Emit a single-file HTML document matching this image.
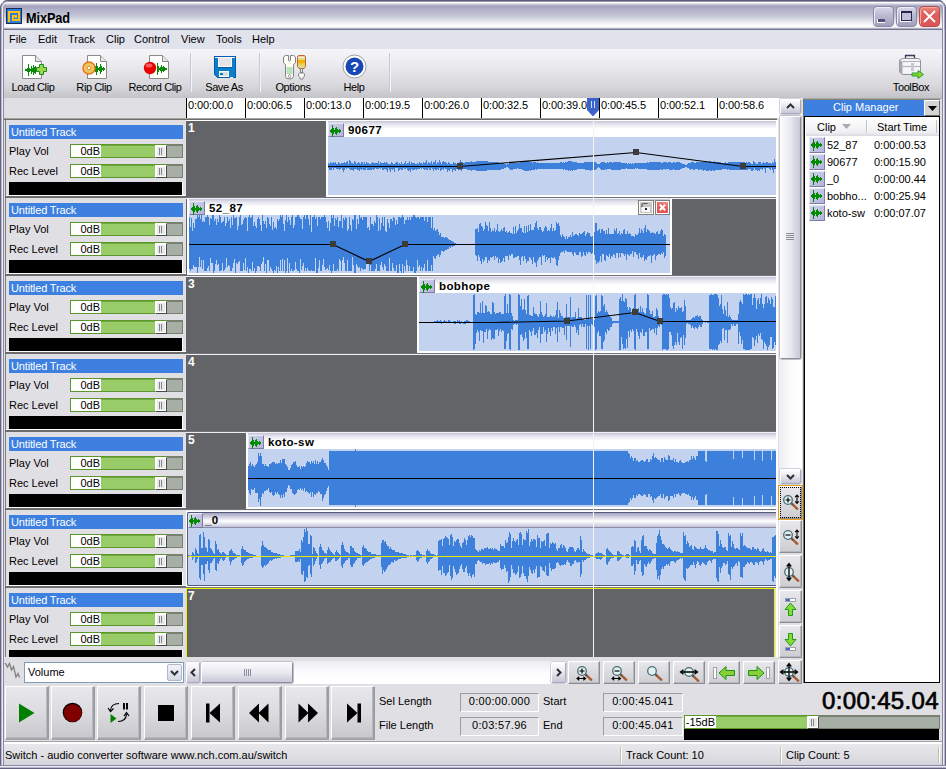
<!DOCTYPE html>
<html><head><meta charset="utf-8"><title>MixPad</title>
<style>
html,body{margin:0;padding:0;}
body{width:946px;height:769px;overflow:hidden;background:#fff;font-family:"Liberation Sans",sans-serif;font-size:11px;color:#000;position:relative;}
.a{position:absolute;}
.t{position:absolute;white-space:nowrap;line-height:13px;}
svg{position:absolute;overflow:visible;}
.btn{position:absolute;box-sizing:border-box;border:1px solid;border-color:#fff #8c8c94 #8c8c94 #fff;background:linear-gradient(#e8e8ec,#cecdd2);box-shadow:inset -1px -1px 0 #b8b8c0;}
.btn2{position:absolute;box-sizing:border-box;border:1px solid;border-color:#fff #a8a8bc #a8a8bc #fff;border-radius:2px;background:linear-gradient(#fefeff,#e6e6ee 50%,#c6c6d6);box-shadow:0 0 0 1px #d0d0dc;}
.fld{position:absolute;box-sizing:border-box;border:1px solid;border-color:#9c9ca4 #fff #fff #9c9ca4;text-align:center;line-height:15px;font-size:11px;letter-spacing:.3px;}
.lane{position:absolute;background:#636467;}
.num{position:absolute;color:#fff;font-weight:bold;font-size:12px;line-height:12px;}
.clip{position:absolute;background:#c3d3ef;overflow:hidden;}
.chead{position:absolute;left:0;top:0;right:0;height:16px;background:linear-gradient(#c4c4d8 0,#e4e4ee 3px,#fff 8px,#fff 100%);}
.chead.sel{height:17px;background:linear-gradient(#fff 0,#fff 1px,#585878 1px,#585878 2px,#a4a4c4 2px,#fff 10px,#c4c4d8 16px,#8c8ca8 16px,#8c8ca8 17px);}
.cname{position:absolute;left:20px;top:2px;font-weight:bold;font-size:11.5px;line-height:14px;letter-spacing:.4px;}
.ico{position:absolute;box-sizing:border-box;width:16px;height:14px;background:linear-gradient(135deg,#d0d0ec,#b4b4dc);border:1px solid;border-color:#e8e8f8 #7c7ca4 #7c7ca4 #e8e8f8;}
.tt{position:absolute;left:9px;width:174px;height:14px;background:#3d80df;color:#fff;line-height:14px;font-size:11px;text-indent:2px;letter-spacing:-.15px;}
.sl{position:absolute;box-sizing:border-box;height:14px;border:1px solid #5c962c;background:#98cc68;box-shadow:inset 0 1px 0 #70a83c;}
.sl .w{position:absolute;left:0;top:0;bottom:0;background:#fff;text-align:right;line-height:13px;font-size:11px;}
.sl .g{position:absolute;top:-1px;bottom:-1px;right:-1px;box-sizing:border-box;background:#a6aea6;border:1px solid #76826f;border-top-width:2px;}
.sl .th{position:absolute;top:0;bottom:-1px;width:12px;box-sizing:border-box;background:#e8e8e8;border:1px solid;border-color:#fff #484848 #484848 #fff;box-shadow:inset 1px 1px 0 #fff,inset -1px -1px 0 #fff;z-index:2;}
.sl .th:before{content:"";position:absolute;left:3px;top:2px;width:1px;height:7px;background:#7c8890;box-shadow:2px 0 0 #7c8890;}
.mi{position:absolute;top:33px;line-height:13px;font-size:11px;}
.tl{position:absolute;top:81px;line-height:13px;font-size:11px;text-align:center;letter-spacing:-.4px;}
.sep{position:absolute;top:53px;width:1px;height:39px;background:#c8c8d8;box-shadow:1px 0 0 #f4f4f8;}
.rt{position:absolute;top:99px;font-size:11px;line-height:13px;letter-spacing:-.1px;}
.tk{position:absolute;top:98px;width:1px;height:20px;background:#000;}
.row{position:absolute;left:827px;font-size:11px;line-height:13px;}
.rowt{position:absolute;left:874px;font-size:11px;line-height:13px;}
</style></head><body>

<div class="a" style="left:0;top:0;width:946px;height:769px;background:#e0dfe3;border-radius:8px 8px 0 0;"></div>
<div class="a" style="left:0;top:0;width:946px;height:30px;border-radius:8px 8px 0 0;background:linear-gradient(#5c5c78 0px,#5c5c78 1px,#9494ac 1px,#9494ac 2px,#ffffff 2px,#ffffff 3px,#e0e0e8 3.5px,#c8c8d8 4.5px,#b0b0c8 5.5px,#a4a4c0 6.5px,#acacc6 8.5px,#b4b4cc 10.5px,#b8bace 12.5px,#c0c2d2 14.5px,#c8cad8 16.5px,#d4d6e0 18.5px,#e0e2e8 20.5px,#ececf0 22.5px,#f8f8fa 24.5px,#ffffff 26.5px,#e8e8ec 27.5px,#b0b0c0 28.5px,#74748f 29px,#74748f 30px);"></div>

<div class="a" style="left:0;top:8px;width:4px;height:761px;background:linear-gradient(90deg,#62627e 0,#62627e 1px,#b8b8cc 1px,#b8b8cc 2px,#ececf4 2px,#ececf4 3px,#8888a0 3px,#8888a0 4px);"></div>
<div class="a" style="left:942px;top:8px;width:4px;height:761px;background:linear-gradient(90deg,#8888a0 0,#8888a0 1px,#ececf4 1px,#ececf4 2px,#b8b8cc 2px,#b8b8cc 3px,#62627e 3px,#62627e 4px);"></div>
<div class="a" style="left:0;top:765px;width:946px;height:4px;background:linear-gradient(#8888a0 0,#8888a0 1px,#ececf4 1px,#ececf4 2px,#b8b8cc 2px,#b8b8cc 3px,#62627e 3px,#62627e 4px);"></div>
<svg style="left:0;top:0" width="946" height="30" viewBox="0 0 946 30" fill="none"><path d="M.5 30V8A7.500 7.500 0 0 1 8 .5M945.500 30V8A7.500 7.500 0 0 0 938 .5" stroke="#62627e"/><path d="M1.500 30V8A6.500 6.500 0 0 1 8 1.500M944.500 30V8A6.500 6.500 0 0 0 938 1.500" stroke="#a4a4bc"/><path d="M2.500 30V8A5.500 5.500 0 0 1 8 2.500M943.500 30V8A5.500 5.500 0 0 0 938 2.500" stroke="#f4f4fa"/><path d="M3.500 30V9A4.500 4.500 0 0 1 6 4.500M942.500 30V9A4.500 4.500 0 0 0 940 4.500" stroke="#9c9cb4" stroke-opacity=".8"/></svg>

<svg style="left:6px;top:8px" width="16" height="16" viewBox="0 0 16 16" shape-rendering="crispEdges"><rect width="16" height="16" fill="#1c2c50"/><rect x="1" y="1" width="14" height="14" fill="#2f7be0"/><path d="M3 14V4H13V12H7V8H10V10" fill="none" stroke="#ffc20e" stroke-width="2"/></svg>
<div class="t" style="left:26px;top:9.6px;font-size:13px;font-weight:bold;line-height:15px;letter-spacing:-.1px;transform:scale(.98,1.1);transform-origin:0 3px;">MixPad</div>

<div class="a" style="left:873px;top:6px;width:21px;height:21px;box-sizing:border-box;border-radius:4px;border:1px solid #8888a8;background:linear-gradient(#d8d8e8 0,#bcbcd4 40%,#a0a0bc 100%);box-shadow:inset 1px 1px 0 #ececf6;"><div class="a" style="left:3px;top:12px;width:8px;height:4px;background:#fff;"></div><div class="a" style="left:4px;top:12px;width:7px;height:3px;background:#50507c;"></div></div>
<div class="a" style="left:896px;top:6px;width:21px;height:21px;box-sizing:border-box;border-radius:4px;border:1px solid #8888a8;background:linear-gradient(#d8d8e8 0,#bcbcd4 40%,#a0a0bc 100%);box-shadow:inset 1px 1px 0 #ececf6;"><div class="a" style="left:3px;top:4px;width:11px;height:11px;box-sizing:border-box;border:1px solid #fff;border-top-width:2px;"></div><div class="a" style="left:4px;top:4px;width:11px;height:10px;box-sizing:border-box;border:1px solid #28284c;border-top-width:2px;background:#c0c0d8;"></div></div>
<div class="a" style="left:919px;top:6px;width:21px;height:21px;box-sizing:border-box;border-radius:4px;border:1px solid #b84c4c;background:linear-gradient(#ec8878 0,#e06060 35%,#dc5456 100%);box-shadow:inset 1px 1px 0 #f4a898;"><svg style="left:3px;top:3px" width="13" height="13" viewBox="0 0 13 13"><path d="M1 1L12 12M12 1L1 12" stroke="#fff" stroke-width="1.900"/></svg></div>

<div class="a" style="left:4px;top:30px;width:938px;height:19px;background:#e0e2ec;"></div>
<div class="mi" style="left:9px">File</div>
<div class="mi" style="left:38px">Edit</div>
<div class="mi" style="left:68px">Track</div>
<div class="mi" style="left:106px">Clip</div>
<div class="mi" style="left:134px">Control</div>
<div class="mi" style="left:181px">View</div>
<div class="mi" style="left:216px">Tools</div>
<div class="mi" style="left:252px">Help</div>
<div class="a" style="left:4px;top:49px;width:938px;height:49px;background:linear-gradient(#f6f6fa 0,#ececf0 30%,#d8d8dc 75%,#c4c4c8 100%);"></div>
<div class="sep" style="left:190px"></div>
<div class="sep" style="left:259px"></div>
<div class="sep" style="left:389px"></div>
<svg style="left:22px;top:55px" width="20" height="24" viewBox="0 0 20 24"><path d="M.5 .5H13.500L19.500 6.500V23.500H.5Z" fill="#fff" stroke="#888" stroke-width="1"/><path d="M13.500 .5V6.500H19.500" fill="#e8e8e8" stroke="#888" stroke-width="1"/></svg>
<svg style="left:25px;top:62px" width="12" height="16" viewBox="0 0 12 16" shape-rendering="crispEdges"><path d="M0.5 7V9M1.5 7V9M2.5 6V10M3.5 2V14M4.5 6V10M5.5 7V9M6.5 4V12M7.5 6V10M8.5 3V13M9.5 5V11M10.5 4V12M11.5 6V10" stroke="#0a8a0a" stroke-width="1" fill="none"/></svg>
<svg style="left:36px;top:64px" width="11" height="11" viewBox="0 0 11 11"><path d="M3.500 .5H7.500V3.500H10.500V7.500H7.500V10.500H3.500V7.500H.5V3.500H3.500Z" fill="#9ad84a" stroke="#1c8c1c" stroke-width="1"/></svg>
<div class="tl" style="left:4px;width:58px;">Load Clip</div>
<svg style="left:87px;top:55px" width="20" height="24" viewBox="0 0 20 24"><path d="M.5 .5H13.500L19.500 6.500V23.500H.5Z" fill="#fff" stroke="#888" stroke-width="1"/><path d="M13.500 .5V6.500H19.500" fill="#e8e8e8" stroke="#888" stroke-width="1"/></svg>
<svg style="left:95px;top:61px" width="10" height="16" viewBox="0 0 10 16" shape-rendering="crispEdges"><path d="M0.5 5V11M1.5 2V14M2.5 5V11M3.5 7V9M4.5 6V10M5.5 3V13M6.5 5V11M7.5 7V9M8.5 6V10M9.5 7V9" stroke="#0a8a0a" stroke-width="1" fill="none"/></svg>
<svg style="left:82px;top:61px" width="14" height="14" viewBox="0 0 14 14"><circle cx="7" cy="7" r="6" fill="#e8c860" stroke="#f07010" stroke-width="1.4"/><circle cx="7" cy="7" r="1.800" fill="#fff" stroke="#f07010" stroke-width=".8"/></svg>
<div class="tl" style="left:65px;width:58px;">Rip Clip</div>
<svg style="left:149px;top:55px" width="20" height="24" viewBox="0 0 20 24"><path d="M.5 .5H13.500L19.500 6.500V23.500H.5Z" fill="#fff" stroke="#888" stroke-width="1"/><path d="M13.500 .5V6.500H19.500" fill="#e8e8e8" stroke="#888" stroke-width="1"/></svg>
<svg style="left:157px;top:61px" width="10" height="16" viewBox="0 0 10 16" shape-rendering="crispEdges"><path d="M0.5 2V14M1.5 5V11M2.5 7V9M3.5 6V10M4.5 4V12M5.5 6V10M6.5 5V11M7.5 6V10M8.5 7V9M9.5 7V9" stroke="#0a8a0a" stroke-width="1" fill="none"/></svg>
<svg style="left:143px;top:61px" width="14" height="14" viewBox="0 0 14 14"><circle cx="7" cy="7" r="6.200" fill="#e80000"/><ellipse cx="6" cy="4.500" rx="3.500" ry="2" fill="#ff8080" opacity=".7"/></svg>
<div class="tl" style="left:126px;width:58px;">Record Clip</div>
<svg style="left:214px;top:56px" width="22" height="22" viewBox="0 0 22 22" shape-rendering="crispEdges"><path d="M0 0H22V22H3L0 19Z" fill="#0858b8"/><path d="M1 1H21V21H3.500L1 18.500Z" fill="#0a80c8"/><rect x="1" y="1" width="20" height="1" fill="#f4f4f8"/><rect x="4" y="1" width="14" height="10" fill="#fffcf4"/><rect x="5" y="2" width="12" height="8" fill="#e4e4ea"/><rect x="4" y="11" width="14" height="1" fill="#0858b8"/><rect x="5" y="15" width="10" height="6" fill="#fffcf4"/><rect x="6" y="16" width="8" height="4" fill="#dcdce4"/><rect x="6" y="17" width="3" height="2" fill="#0a80c8"/><rect x="16" y="21" width="3" height="1" fill="#f0f0f4"/></svg>
<div class="tl" style="left:195px;width:58px;">Save As</div>
<svg style="left:282px;top:54px" width="26" height="27" viewBox="0 0 26 27"><path d="M3.500 1.500H6.500V6Q6.500 7 7.500 7Q8.500 7 8.500 6V1.500H11.500Q13.500 2 13.500 4V8.500L11.500 11V22.500Q11.500 25 7.500 25Q3.500 25 3.500 22.500V11L1.500 8.500V4Q1.500 2 3.500 1.500Z" fill="#fffcf2" stroke="#82828e" stroke-width="1"/><rect x="4.500" y="13" width="6" height="7" fill="#b8e2bc"/><path d="M7.500 20.300L8.800 22.300L7.500 24.300L6.200 22.300Z" fill="#fff" stroke="#82828e" stroke-width=".8"/><path d="M16.500 1.500H22.500L23.500 3V12.500L22 14.500H17L15.500 12.500V3Z" fill="#dcdc84"/><rect x="16" y="2" width="7" height="1" fill="#f4c8a8"/><rect x="16" y="3" width="7" height="1" fill="#f4f0d0"/><rect x="16" y="6" width="7" height="3.500" fill="#f4b400"/><rect x="16" y="9.500" width="7" height="1.500" fill="#e8cc50"/><path d="M16.500 1.500H22.500L23.500 3V12.500L22 14.500H17L15.500 12.500V3Z" fill="none" stroke="#c06434" stroke-width="1"/><rect x="18.500" y="14.500" width="2" height="4.500" fill="#d8f0d8" stroke="#82828e" stroke-width="1"/><path d="M17.500 19Q16.500 19.200 16.500 21V22L18 23.500V25H21V23.500L22.500 22V21Q22.500 19.200 21.500 19Z" fill="#fffcf2" stroke="#82828e" stroke-width="1"/></svg>
<div class="tl" style="left:264px;width:58px;">Options</div>
<svg style="left:342px;top:54px" width="25" height="25" viewBox="0 0 25 25"><circle cx="12.500" cy="12.500" r="11.500" fill="#fff" stroke="#9c9ca8" stroke-width="1"/><circle cx="12.500" cy="12.500" r="9" fill="#1848b8"/><text x="12.500" y="18" font-family="Liberation Sans,sans-serif" font-weight="bold" font-size="15" fill="#fff" text-anchor="middle">?</text></svg>
<div class="tl" style="left:325px;width:58px;">Help</div>
<svg style="left:899px;top:54px" width="25" height="26" viewBox="0 0 25 26"><path d="M6.500 5V1.500H15.500V5" fill="none" stroke="#383858" stroke-width="1.300"/><path d="M.5 6L3.500 4.500H19.500L21.500 6V20.500H3.500L.5 18Z" fill="#f4f4f8" stroke="#909098" stroke-width="1"/><path d="M.5 6L3.500 7.500V20.500L.5 18Z" fill="#a8a8b4"/><path d="M3.500 7.500H21.500M3.500 12.500H21.500" stroke="#b0b0b8" stroke-width="1"/><rect x="12" y="9" width="3" height="8" fill="#c8c8d0"/><path d="M13 19V22H19V24.500L24.500 20.500L19 16.500V19Z" fill="#88d038" stroke="#28a028" stroke-width="1"/></svg>
<div class="tl" style="left:881px;width:60px;">ToolBox</div>
<div class="a" style="left:186px;top:98px;width:593px;height:20px;background:#fff;"></div>
<div class="tk" style="left:186px"></div><div class="rt" style="left:188px">0:00:00.0</div>
<div class="tk" style="left:245px"></div><div class="rt" style="left:247px">0:00:06.5</div>
<div class="tk" style="left:304px"></div><div class="rt" style="left:306px">0:00:13.0</div>
<div class="tk" style="left:363px"></div><div class="rt" style="left:365px">0:00:19.5</div>
<div class="tk" style="left:422px"></div><div class="rt" style="left:424px">0:00:26.0</div>
<div class="tk" style="left:481px"></div><div class="rt" style="left:483px">0:00:32.5</div>
<div class="tk" style="left:540px"></div><div class="rt" style="left:542px">0:00:39.0</div>
<div class="tk" style="left:599px"></div><div class="rt" style="left:601px">0:00:45.5</div>
<div class="tk" style="left:658px"></div><div class="rt" style="left:660px">0:00:52.1</div>
<div class="tk" style="left:717px"></div><div class="rt" style="left:719px">0:00:58.6</div>
<div class="a" style="left:4px;top:118px;width:773px;height:1px;background:#a4a49c;"></div>
<div class="a" style="left:4px;top:119px;width:773px;height:1px;background:#6c6c6c;"></div>
<div class="a" style="left:186px;top:120px;width:591px;height:1px;background:#fff;"></div>
<div class="a" style="left:5px;top:118px;width:1px;height:539px;background:#7c7c7c;"></div>
<div class="a" style="left:776px;top:120px;width:2px;height:537px;background:#fff;"></div>
<div class="tt" style="top:125px">Untitled Track</div>
<div class="t" style="left:9px;top:145px">Play Vol</div>
<div class="t" style="left:9px;top:165px">Rec Level</div>
<div class="sl" style="left:70px;top:144px;width:113px;"><div class="w" style="width:30px">0dB&#8202;</div><div class="th" style="left:84px"></div><div class="g" style="width:17px"></div></div>
<div class="sl" style="left:70px;top:164px;width:113px;"><div class="w" style="width:30px">0dB&#8202;</div><div class="th" style="left:84px"></div><div class="g" style="width:17px"></div></div>
<div class="a" style="left:9px;top:182px;width:173px;height:13px;background:#000;"></div>
<div class="a" style="left:182px;top:182px;width:1px;height:13px;background:#fff;"></div>
<div class="lane" style="left:186px;top:121px;width:590px;height:76px;"></div>
<div class="num" style="left:188px;top:122px">1</div>
<div class="a" style="left:6px;top:195px;width:180px;height:1px;background:#fff;"></div>
<div class="a" style="left:5px;top:196px;width:181px;height:2px;background:#6c6c6c;"></div>
<div class="tt" style="top:203px">Untitled Track</div>
<div class="t" style="left:9px;top:223px">Play Vol</div>
<div class="t" style="left:9px;top:243px">Rec Level</div>
<div class="sl" style="left:70px;top:222px;width:113px;"><div class="w" style="width:30px">0dB&#8202;</div><div class="th" style="left:84px"></div><div class="g" style="width:17px"></div></div>
<div class="sl" style="left:70px;top:242px;width:113px;"><div class="w" style="width:30px">0dB&#8202;</div><div class="th" style="left:84px"></div><div class="g" style="width:17px"></div></div>
<div class="a" style="left:9px;top:260px;width:173px;height:13px;background:#000;"></div>
<div class="a" style="left:182px;top:260px;width:1px;height:13px;background:#fff;"></div>
<div class="lane" style="left:186px;top:199px;width:590px;height:76px;"></div>
<div class="a" style="left:186px;top:197px;width:590px;height:1px;background:#737478;"></div><div class="a" style="left:186px;top:198px;width:590px;height:1px;background:#f0f0f4;"></div>
<div class="num" style="left:188px;top:200px">2</div>
<div class="a" style="left:6px;top:273px;width:180px;height:1px;background:#fff;"></div>
<div class="a" style="left:5px;top:274px;width:181px;height:2px;background:#6c6c6c;"></div>
<div class="tt" style="top:281px">Untitled Track</div>
<div class="t" style="left:9px;top:301px">Play Vol</div>
<div class="t" style="left:9px;top:321px">Rec Level</div>
<div class="sl" style="left:70px;top:300px;width:113px;"><div class="w" style="width:30px">0dB&#8202;</div><div class="th" style="left:84px"></div><div class="g" style="width:17px"></div></div>
<div class="sl" style="left:70px;top:320px;width:113px;"><div class="w" style="width:30px">0dB&#8202;</div><div class="th" style="left:84px"></div><div class="g" style="width:17px"></div></div>
<div class="a" style="left:9px;top:338px;width:173px;height:13px;background:#000;"></div>
<div class="a" style="left:182px;top:338px;width:1px;height:13px;background:#fff;"></div>
<div class="lane" style="left:186px;top:277px;width:590px;height:76px;"></div>
<div class="a" style="left:186px;top:275px;width:590px;height:1px;background:#737478;"></div><div class="a" style="left:186px;top:276px;width:590px;height:1px;background:#f0f0f4;"></div>
<div class="num" style="left:188px;top:278px">3</div>
<div class="a" style="left:6px;top:351px;width:180px;height:1px;background:#fff;"></div>
<div class="a" style="left:5px;top:352px;width:181px;height:2px;background:#6c6c6c;"></div>
<div class="tt" style="top:359px">Untitled Track</div>
<div class="t" style="left:9px;top:379px">Play Vol</div>
<div class="t" style="left:9px;top:399px">Rec Level</div>
<div class="sl" style="left:70px;top:378px;width:113px;"><div class="w" style="width:30px">0dB&#8202;</div><div class="th" style="left:84px"></div><div class="g" style="width:17px"></div></div>
<div class="sl" style="left:70px;top:398px;width:113px;"><div class="w" style="width:30px">0dB&#8202;</div><div class="th" style="left:84px"></div><div class="g" style="width:17px"></div></div>
<div class="a" style="left:9px;top:416px;width:173px;height:13px;background:#000;"></div>
<div class="a" style="left:182px;top:416px;width:1px;height:13px;background:#fff;"></div>
<div class="lane" style="left:186px;top:355px;width:590px;height:76px;"></div>
<div class="a" style="left:186px;top:353px;width:590px;height:1px;background:#737478;"></div><div class="a" style="left:186px;top:354px;width:590px;height:1px;background:#f0f0f4;"></div>
<div class="num" style="left:188px;top:356px">4</div>
<div class="a" style="left:6px;top:429px;width:180px;height:1px;background:#fff;"></div>
<div class="a" style="left:5px;top:430px;width:181px;height:2px;background:#6c6c6c;"></div>
<div class="tt" style="top:437px">Untitled Track</div>
<div class="t" style="left:9px;top:457px">Play Vol</div>
<div class="t" style="left:9px;top:477px">Rec Level</div>
<div class="sl" style="left:70px;top:456px;width:113px;"><div class="w" style="width:30px">0dB&#8202;</div><div class="th" style="left:84px"></div><div class="g" style="width:17px"></div></div>
<div class="sl" style="left:70px;top:476px;width:113px;"><div class="w" style="width:30px">0dB&#8202;</div><div class="th" style="left:84px"></div><div class="g" style="width:17px"></div></div>
<div class="a" style="left:9px;top:494px;width:173px;height:13px;background:#000;"></div>
<div class="a" style="left:182px;top:494px;width:1px;height:13px;background:#fff;"></div>
<div class="lane" style="left:186px;top:433px;width:590px;height:76px;"></div>
<div class="a" style="left:186px;top:431px;width:590px;height:1px;background:#737478;"></div><div class="a" style="left:186px;top:432px;width:590px;height:1px;background:#f0f0f4;"></div>
<div class="num" style="left:188px;top:434px">5</div>
<div class="a" style="left:6px;top:507px;width:180px;height:1px;background:#fff;"></div>
<div class="a" style="left:5px;top:508px;width:181px;height:2px;background:#6c6c6c;"></div>
<div class="tt" style="top:515px">Untitled Track</div>
<div class="t" style="left:9px;top:535px">Play Vol</div>
<div class="t" style="left:9px;top:555px">Rec Level</div>
<div class="sl" style="left:70px;top:534px;width:113px;"><div class="w" style="width:30px">0dB&#8202;</div><div class="th" style="left:84px"></div><div class="g" style="width:17px"></div></div>
<div class="sl" style="left:70px;top:554px;width:113px;"><div class="w" style="width:30px">0dB&#8202;</div><div class="th" style="left:84px"></div><div class="g" style="width:17px"></div></div>
<div class="a" style="left:9px;top:572px;width:173px;height:13px;background:#000;"></div>
<div class="a" style="left:182px;top:572px;width:1px;height:13px;background:#fff;"></div>
<div class="lane" style="left:186px;top:511px;width:590px;height:76px;"></div>
<div class="a" style="left:186px;top:509px;width:590px;height:1px;background:#737478;"></div><div class="a" style="left:186px;top:510px;width:590px;height:1px;background:#f0f0f4;"></div>
<div class="num" style="left:188px;top:512px">6</div>
<div class="a" style="left:6px;top:585px;width:180px;height:1px;background:#fff;"></div>
<div class="a" style="left:5px;top:586px;width:181px;height:2px;background:#6c6c6c;"></div>
<div class="tt" style="top:593px">Untitled Track</div>
<div class="t" style="left:9px;top:613px">Play Vol</div>
<div class="t" style="left:9px;top:633px">Rec Level</div>
<div class="sl" style="left:70px;top:612px;width:113px;"><div class="w" style="width:30px">0dB&#8202;</div><div class="th" style="left:84px"></div><div class="g" style="width:17px"></div></div>
<div class="sl" style="left:70px;top:632px;width:113px;"><div class="w" style="width:30px">0dB&#8202;</div><div class="th" style="left:84px"></div><div class="g" style="width:17px"></div></div>
<div class="a" style="left:9px;top:650px;width:173px;height:7px;background:#000;"></div>
<div class="a" style="left:182px;top:650px;width:1px;height:7px;background:#fff;"></div>
<div class="lane" style="left:186px;top:589px;width:589px;height:68px;"></div>
<div class="a" style="left:186px;top:587px;width:590px;height:1px;background:#737478;"></div><div class="a" style="left:186px;top:588px;width:590px;height:1px;background:#f0f0f4;"></div>
<div class="num" style="left:188px;top:590px">7</div>
<div class="a" style="left:326px;top:121px;width:450px;height:76px;background:#fff;"></div><div class="clip" style="left:328px;top:121px;width:448px;height:74px;"><div class="chead"></div><div class="ico" style="left:0;top:2px;"></div><svg style="left:2px;top:2px" width="12" height="16" viewBox="0 0 12 16" shape-rendering="crispEdges"><path d="M0.5 7V9M1.5 6V10M2.5 2V14M3.5 5V11M4.5 7V9M5.5 5V11M6.5 4V12M7.5 6V10M8.5 7V9M9.5 6V10M10.5 7V9" stroke="#008a00" stroke-width="1" fill="none"/></svg><div class="cname">90677</div><svg style="left:0;top:0" width="448" height="74" viewBox="0 0 448 74" shape-rendering="crispEdges"><path d="M0.5 42V47M1.5 43V49M2.5 41V49M3.5 42V49M4.5 42V47M5.5 41V49M6.5 42V47M7.5 41V47M8.5 43V48M9.5 43V48M10.5 41V48M11.5 42V49M12.5 43V48M13.5 42V47M14.5 42V49M15.5 42V51M16.5 41V49M17.5 42V47M18.5 41V48M19.5 40V47M20.5 43V47M21.5 39V48M22.5 40V49M23.5 42V49M24.5 42V49M25.5 43V50M26.5 40V48M27.5 41V48M28.5 43V48M29.5 42V49M30.5 41V49M31.5 42V50M32.5 43V48M33.5 41V49M34.5 41V48M35.5 43V49M36.5 41V49M37.5 43V49M38.5 41V47M39.5 42V49M40.5 42V49M41.5 43V49M42.5 43V49M43.5 42V49M44.5 41V48M45.5 42V49M46.5 42V48M47.5 42V47M48.5 42V48M49.5 42V48M50.5 40V48M51.5 43V47M52.5 41V48M53.5 42V47M54.5 42V49M55.5 42V49M56.5 41V48M57.5 42V48M58.5 41V49M59.5 42V51M60.5 43V47M61.5 43V49M62.5 43V51M63.5 41V48M64.5 42V49M65.5 43V48M66.5 43V51M67.5 42V47M68.5 41V47M69.5 41V47M70.5 43V50M71.5 42V49M72.5 43V48M73.5 41V49M74.5 43V49M75.5 43V47M76.5 42V48M77.5 40V48M78.5 43V47M79.5 42V49M80.5 42V50M81.5 40V49M82.5 43V51M83.5 41V48M84.5 42V49M85.5 42V49M86.5 42V49M87.5 43V48M88.5 43V49M89.5 42V48M90.5 43V48M91.5 41V48M92.5 42V47M93.5 42V48M94.5 43V47M95.5 41V48M96.5 42V49M97.5 41V48M98.5 39V49M99.5 43V49M100.5 41V47M101.5 42V49M102.5 42V49M103.5 40V47M104.5 43V48M105.5 41V50M106.5 41V48M107.5 39V49M108.5 43V49M109.5 41V48M110.5 42V49M111.5 39V47M112.5 41V50M113.5 43V49M114.5 41V48M115.5 40V49M116.5 41V47M117.5 41V48M118.5 42V48M119.5 43V51M120.5 41V49M121.5 42V50M122.5 43V48M123.5 43V48M124.5 43V51M125.5 41V49M126.5 42V49M127.5 42V50M128.5 43V48M129.5 42V48M130.5 42V49M131.5 41V49M132.5 39V49M133.5 41V50M134.5 41V48M135.5 42V48M136.5 42V48M137.5 41V48M138.5 41V48M139.5 41V49M140.5 41V49M141.5 41V49M142.5 41V49M143.5 40V50M144.5 41V49M145.5 41V49M146.5 41V49M147.5 41V49M148.5 40V50M149.5 40V50M150.5 40V50M151.5 40V50M152.5 40V50M153.5 40V50M154.5 40V50M155.5 40V50M156.5 40V50M157.5 40V50M158.5 40V50M159.5 40V49M160.5 41V49M161.5 41V49M162.5 41V49M163.5 41V49M164.5 41V49M165.5 41V49M166.5 41V49M167.5 41V49M168.5 41V49M169.5 41V49M170.5 41V49M171.5 42V49M172.5 42V49M173.5 42V48M174.5 42V48M175.5 42V48M176.5 43V47M177.5 43V47M178.5 44V46M179.5 43V46M180.5 43V47M181.5 42V48M182.5 41V49M183.5 41V49M184.5 41V49M185.5 42V48M186.5 42V48M187.5 42V48M188.5 42V48M189.5 42V47M190.5 42V48M191.5 42V48M192.5 41V48M193.5 41V48M194.5 41V49M195.5 40V49M196.5 41V50M197.5 40V50M198.5 40V50M199.5 40V50M200.5 40V50M201.5 41V49M202.5 41V50M203.5 41V49M204.5 42V49M205.5 41V49M206.5 41V49M207.5 41V48M208.5 42V49M209.5 41V48M210.5 42V48M211.5 42V48M212.5 42V48M213.5 42V48M214.5 42V48M215.5 42V48M216.5 42V48M217.5 42V48M218.5 42V48M219.5 42V48M220.5 42V48M221.5 42V48M222.5 42V48M223.5 42V48M224.5 42V48M225.5 42V48M226.5 42V48M227.5 42V48M228.5 42V48M229.5 42V48M230.5 42V48M231.5 42V48M232.5 41V48M233.5 41V48M234.5 42V48M235.5 41V49M236.5 42V48M237.5 41V49M238.5 41V49M239.5 41V49M240.5 40V50M241.5 40V49M242.5 40V50M243.5 40V49M244.5 41V50M245.5 41V49M246.5 41V49M247.5 41V49M248.5 41V49M249.5 42V48M250.5 42V48M251.5 42V48M252.5 42V48M253.5 42V48M254.5 42V48M255.5 42V48M256.5 41V48M257.5 41V49M258.5 41V49M259.5 41V49M260.5 41V49M261.5 41V49M262.5 41V50M263.5 41V49M264.5 41V49M265.5 40V49M266.5 41V49M267.5 41V49M268.5 42V48M269.5 43V47M270.5 43V46M271.5 43V47M272.5 42V48M273.5 41V49M274.5 41V49M275.5 41V49M276.5 41V49M277.5 42V48M278.5 42V49M279.5 41V48M280.5 42V48M281.5 41V48M282.5 41V48M283.5 41V49M284.5 42V49M285.5 41V49M286.5 41V49M287.5 41V49M288.5 41V49M289.5 41V49M290.5 41V49M291.5 41V49M292.5 41V49M293.5 42V48M294.5 42V48M295.5 42V48M296.5 42V48M297.5 42V48M298.5 42V47M299.5 43V48M300.5 42V48M301.5 43V48M302.5 42V48M303.5 43V48M304.5 42V48M305.5 43V48M306.5 42V48M307.5 42V47M308.5 42V48M309.5 42V47M310.5 42V48M311.5 42V48M312.5 42V48M313.5 42V48M314.5 42V48M315.5 42V48M316.5 42V48M317.5 42V48M318.5 42V48M319.5 41V49M320.5 42V49M321.5 41V49M322.5 41V49M323.5 41V49M324.5 41V49M325.5 41V49M326.5 41V49M327.5 41V49M328.5 41V49M329.5 41V49M330.5 41V49M331.5 41V49M332.5 41V48M333.5 42V49M334.5 42V49M335.5 41V48M336.5 41V48M337.5 41V49M338.5 41V48M339.5 42V48M340.5 41V48M341.5 41V49M342.5 41V49M343.5 42V49M344.5 42V49M345.5 41V48M346.5 41V49M347.5 42V49M348.5 41V49M349.5 41V49M350.5 41V49M351.5 41V49M352.5 42V48M353.5 42V48M354.5 43V47M355.5 43V47M356.5 43V47M357.5 44V46M358.5 44V46M359.5 43V47M360.5 42V47M361.5 42V48M362.5 42V49M363.5 41V48M364.5 41V48M365.5 41V49M366.5 42V49M367.5 42V48M368.5 41V48M369.5 41V48M370.5 41V49M371.5 41V49M372.5 41V48M373.5 41V49M374.5 41V49M375.5 41V50M376.5 41V49M377.5 40V49M378.5 41V50M379.5 41V50M380.5 41V50M381.5 40V49M382.5 40V50M383.5 41V50M384.5 41V49M385.5 41V50M386.5 40V50M387.5 41V49M388.5 41V49M389.5 41V49M390.5 41V49M391.5 41V49M392.5 41V49M393.5 42V49M394.5 42V48M395.5 42V48M396.5 42V48M397.5 41V48M398.5 42V48M399.5 42V49M400.5 41V48M401.5 41V49M402.5 41V49M403.5 41V49M404.5 41V49M405.5 41V49M406.5 41V49M407.5 41V49M408.5 41V49M409.5 41V49M410.5 41V49M411.5 41V49M412.5 41V49M413.5 41V49M414.5 41V49M415.5 41V49M416.5 41V49M417.5 42V49M418.5 41V49M419.5 42V49M420.5 41V48M421.5 41V48M422.5 42V48M423.5 43V50M424.5 43V50M425.5 40V49M426.5 41V47M427.5 42V49M428.5 43V49M429.5 43V50M430.5 41V49M431.5 41V50M432.5 41V48M433.5 43V48M434.5 42V49M435.5 41V47M436.5 42V48M437.5 42V52M438.5 41V47M439.5 41V47M440.5 42V47M441.5 42V48M442.5 42V49M443.5 43V47M444.5 41V49M445.5 42V52M446.5 38V48M447.5 41V48" stroke="#3d80db" stroke-width="1" fill="none"/></svg><svg style="left:0;top:0" width="448" height="74" viewBox="0 0 448 74"><polyline points="0,45.5 132,45.5 308,31.5 415,45.5 448,45.5" fill="none" stroke="#000" stroke-width="1.15"/><rect x="129" y="42" width="6" height="6" fill="#3c3c3c" shape-rendering="crispEdges"/><rect x="305" y="28" width="6" height="6" fill="#3c3c3c" shape-rendering="crispEdges"/><rect x="412" y="42" width="6" height="6" fill="#3c3c3c" shape-rendering="crispEdges"/></svg></div>
<div class="a" style="left:187px;top:199px;width:485px;height:76px;background:#fff;"></div><div class="clip" style="left:189px;top:199px;width:481px;height:74px;"><div class="chead"></div><div class="ico" style="left:0;top:2px;"></div><svg style="left:2px;top:2px" width="12" height="16" viewBox="0 0 12 16" shape-rendering="crispEdges"><path d="M0.5 7V9M1.5 6V10M2.5 2V14M3.5 5V11M4.5 7V9M5.5 5V11M6.5 4V12M7.5 6V10M8.5 7V9M9.5 6V10M10.5 7V9" stroke="#008a00" stroke-width="1" fill="none"/></svg><div class="cname">52_87</div><svg style="left:0;top:0" width="481" height="74" viewBox="0 0 481 74" shape-rendering="crispEdges"><path d="M0.5 18V70M1.5 28V72M2.5 19V70M3.5 32V70M4.5 24V66M5.5 29V68M6.5 20V68M7.5 20V68M8.5 16V74M9.5 18V68M10.5 16V58M11.5 20V68M12.5 16V61M13.5 23V70M14.5 22V61M15.5 23V72M16.5 18V72M17.5 18V72M18.5 16V69M19.5 18V67M20.5 26V72M21.5 19V59M22.5 20V64M23.5 16V64M24.5 16V74M25.5 22V72M26.5 20V65M27.5 26V61M28.5 20V66M29.5 23V65M30.5 16V72M31.5 18V72M32.5 24V71M33.5 23V64M34.5 22V72M35.5 18V71M36.5 27V69M37.5 24V59M38.5 18V68M39.5 22V66M40.5 20V67M41.5 29V72M42.5 18V72M43.5 26V69M44.5 16V64M45.5 19V60M46.5 19V74M47.5 18V64M48.5 31V65M49.5 27V63M50.5 18V62M51.5 16V72M52.5 26V72M53.5 25V72M54.5 21V64M55.5 19V71M56.5 18V59M57.5 19V72M58.5 32V68M59.5 18V74M60.5 16V70M61.5 19V70M62.5 18V72M63.5 16V63M64.5 27V72M65.5 23V69M66.5 27V74M67.5 29V72M68.5 20V67M69.5 18V67M70.5 20V68M71.5 26V72M72.5 32V65M73.5 16V63M74.5 22V58M75.5 25V72M76.5 22V65M77.5 29V74M78.5 18V61M79.5 19V61M80.5 25V72M81.5 27V68M82.5 18V70M83.5 31V72M84.5 23V74M85.5 29V71M86.5 28V72M87.5 30V67M88.5 20V74M89.5 22V68M90.5 20V72M91.5 16V61M92.5 18V72M93.5 16V60M94.5 25V72M95.5 32V61M96.5 21V74M97.5 16V72M98.5 23V59M99.5 18V74M100.5 21V64M101.5 26V72M102.5 18V70M103.5 16V72M104.5 29V72M105.5 26V71M106.5 18V63M107.5 18V70M108.5 16V72M109.5 16V72M110.5 18V74M111.5 20V60M112.5 20V71M113.5 30V67M114.5 18V64M115.5 16V72M116.5 20V69M117.5 16V72M118.5 16V69M119.5 20V71M120.5 26V72M121.5 16V72M122.5 33V71M123.5 18V72M124.5 18V72M125.5 16V72M126.5 20V59M127.5 18V74M128.5 27V74M129.5 18V69M130.5 18V61M131.5 20V72M132.5 18V72M133.5 18V66M134.5 18V60M135.5 16V68M136.5 18V71M137.5 23V70M138.5 29V69M139.5 22V71M140.5 32V66M141.5 24V72M142.5 16V74M143.5 19V72M144.5 16V65M145.5 27V72M146.5 19V72M147.5 21V72M148.5 18V70M149.5 28V72M150.5 22V60M151.5 22V62M152.5 16V72M153.5 29V61M154.5 19V58M155.5 21V64M156.5 18V72M157.5 19V72M158.5 32V61M159.5 30V72M160.5 18V72M161.5 26V72M162.5 32V72M163.5 20V58M164.5 21V66M165.5 16V74M166.5 16V74M167.5 30V65M168.5 20V67M169.5 25V69M170.5 16V68M171.5 19V72M172.5 18V69M173.5 21V70M174.5 18V71M175.5 18V70M176.5 18V70M177.5 18V65M178.5 29V62M179.5 28V62M180.5 31V72M181.5 18V66M182.5 25V72M183.5 25V72M184.5 27V72M185.5 22V72M186.5 24V70M187.5 16V65M188.5 18V72M189.5 32V72M190.5 19V72M191.5 31V66M192.5 24V63M193.5 18V68M194.5 27V71M195.5 18V65M196.5 32V67M197.5 33V72M198.5 20V72M199.5 24V72M200.5 29V59M201.5 20V72M202.5 20V72M203.5 22V64M204.5 18V69M205.5 19V72M206.5 26V72M207.5 21V66M208.5 25V74M209.5 18V74M210.5 18V65M211.5 19V72M212.5 18V74M213.5 16V65M214.5 18V74M215.5 25V67M216.5 21V72M217.5 21V61M218.5 18V66M219.5 21V72M220.5 18V67M221.5 21V72M222.5 18V72M223.5 18V72M224.5 16V68M225.5 16V74M226.5 18V74M227.5 19V72M228.5 18V61M229.5 18V68M230.5 20V66M231.5 18V72M232.5 18V68M233.5 18V72M234.5 18V69M235.5 22V65M236.5 18V72M237.5 18V72M238.5 23V61M239.5 18V72M240.5 18V72M241.5 18V72M242.5 29V66M243.5 18V72M244.5 31V57M245.5 29V59M246.5 32V60M247.5 31V57M248.5 30V56M249.5 33V55M250.5 36V58M251.5 34V56M252.5 38V52M253.5 38V52M254.5 38V53M255.5 39V52M256.5 38V51M257.5 38V51M258.5 39V50M259.5 40V50M260.5 41V48M261.5 41V49M262.5 42V47M263.5 42V48M264.5 43V47M265.5 44V47M266.5 44V46M286.5 30V56M287.5 30V57M288.5 29V62M289.5 33V56M290.5 25V58M291.5 24V62M292.5 27V65M293.5 28V60M294.5 32V63M295.5 30V61M296.5 23V58M297.5 26V58M298.5 27V64M299.5 32V61M300.5 23V62M301.5 29V58M302.5 33V59M303.5 31V58M304.5 32V57M305.5 29V61M306.5 33V57M307.5 31V59M308.5 25V58M309.5 32V64M310.5 33V60M311.5 32V64M312.5 30V63M313.5 32V62M314.5 29V59M315.5 28V63M316.5 33V57M317.5 32V57M318.5 34V57M319.5 33V61M320.5 32V56M321.5 34V57M322.5 34V55M323.5 35V55M324.5 28V59M325.5 35V59M326.5 27V58M327.5 34V58M328.5 32V57M329.5 30V57M330.5 25V61M331.5 29V66M332.5 29V58M333.5 33V57M334.5 34V62M335.5 27V57M336.5 34V60M337.5 27V64M338.5 33V62M339.5 26V62M340.5 32V58M341.5 25V59M342.5 31V61M343.5 31V65M344.5 31V58M345.5 28V63M346.5 24V64M347.5 22V68M348.5 29V62M349.5 31V60M350.5 28V58M351.5 28V58M352.5 31V66M353.5 33V56M354.5 32V57M355.5 29V56M356.5 27V63M357.5 28V58M358.5 32V61M359.5 31V59M360.5 32V59M361.5 29V64M362.5 25V58M363.5 32V59M364.5 29V59M365.5 32V58M366.5 31V60M367.5 23V66M368.5 25V67M369.5 24V61M370.5 27V57M371.5 36V54M372.5 38V53M373.5 35V53M374.5 37V52M375.5 38V54M376.5 40V51M377.5 37V52M378.5 40V53M379.5 38V53M380.5 38V53M381.5 36V53M382.5 38V53M383.5 33V55M384.5 37V57M385.5 36V53M386.5 35V54M387.5 35V56M388.5 36V56M389.5 37V56M390.5 34V53M391.5 35V53M392.5 35V58M393.5 34V57M394.5 33V53M395.5 32V56M396.5 37V57M397.5 35V53M398.5 33V55M399.5 34V53M400.5 34V53M401.5 37V54M402.5 38V55M403.5 37V54M404.5 34V55M405.5 33V56M406.5 24V61M407.5 24V65M408.5 32V63M409.5 31V64M410.5 30V62M411.5 34V57M412.5 30V63M413.5 30V55M414.5 32V55M415.5 32V61M416.5 35V62M417.5 31V56M418.5 35V57M419.5 29V58M420.5 35V55M421.5 35V60M422.5 35V57M423.5 35V58M424.5 35V55M425.5 30V56M426.5 32V59M427.5 29V54M428.5 35V54M429.5 34V59M430.5 32V54M431.5 36V58M432.5 34V54M433.5 35V54M434.5 31V55M435.5 30V57M436.5 35V55M437.5 35V61M438.5 32V55M439.5 35V56M440.5 34V57M441.5 35V55M442.5 37V55M443.5 37V52M444.5 37V58M445.5 38V53M446.5 35V53M447.5 36V55M448.5 36V56M449.5 34V60M450.5 29V54M451.5 34V58M452.5 30V59M453.5 32V58M454.5 34V56M455.5 29V62M456.5 26V60M457.5 33V61M458.5 30V58M459.5 31V57M460.5 32V57M461.5 34V56M462.5 34V64M463.5 33V57M464.5 34V56M465.5 34V55M466.5 35V61M467.5 33V57M468.5 32V56M469.5 35V55M470.5 35V55M471.5 32V56M472.5 30V54M473.5 31V55M474.5 37V53M475.5 35V59M476.5 36V57" stroke="#3d80db" stroke-width="1" fill="none"/></svg><svg style="left:0;top:0" width="481" height="74" viewBox="0 0 481 74"><polyline points="0,45.5 144,45.5 180,62.5 216,45.5 481,45.5" fill="none" stroke="#000" stroke-width="1.15"/><rect x="141" y="42" width="6" height="6" fill="#3c3c3c" shape-rendering="crispEdges"/><rect x="177" y="59" width="6" height="6" fill="#3c3c3c" shape-rendering="crispEdges"/><rect x="213" y="42" width="6" height="6" fill="#3c3c3c" shape-rendering="crispEdges"/></svg><div class="a" style="left:449px;top:1px;width:16px;height:15px;box-sizing:border-box;border:1px solid #808080;background:#c6c6c6;box-shadow:inset 0 0 0 1px #fffcf0;"><svg style="left:1px;top:1px" width="11" height="11" viewBox="0 0 11 11"><path d="M2 5V3Q2 1.500 4 1.500H7.500" fill="none" stroke="#585858" stroke-width="1.200"/><rect x="2" y="5" width="8" height="5" fill="#f8f8f8" shape-rendering="crispEdges"/><rect x="1" y="6" width="1" height="1" fill="#f8f8f8"/><rect x="1" y="8" width="1" height="1" fill="#f8f8f8"/><rect x="5" y="6" width="2" height="2" fill="#202040" shape-rendering="crispEdges"/></svg></div><div class="a" style="left:466px;top:1px;width:15px;height:15px;box-sizing:border-box;border:1px solid #808080;background:linear-gradient(200deg,#f4a8a0,#e45c58 45%,#e05050);box-shadow:inset 0 0 0 1px #fff;"><svg style="left:3px;top:3px" width="7" height="7" viewBox="0 0 7 7"><path d="M.8 .8L6.200 6.200M6.200 .8L.8 6.200" stroke="#fff" stroke-width="2.100"/></svg></div></div>
<div class="a" style="left:417px;top:277px;width:359px;height:76px;background:#fff;"></div><div class="clip" style="left:419px;top:277px;width:357px;height:74px;"><div class="chead"></div><div class="ico" style="left:0;top:2px;"></div><svg style="left:2px;top:2px" width="12" height="16" viewBox="0 0 12 16" shape-rendering="crispEdges"><path d="M0.5 7V9M1.5 6V10M2.5 2V14M3.5 5V11M4.5 7V9M5.5 5V11M6.5 4V12M7.5 6V10M8.5 7V9M9.5 6V10M10.5 7V9" stroke="#008a00" stroke-width="1" fill="none"/></svg><div class="cname">bobhope</div><svg style="left:0;top:0" width="357" height="74" viewBox="0 0 357 74" shape-rendering="crispEdges"><path d="M15.5 44V46M16.5 44V46M17.5 44V46M18.5 43V46M19.5 44V45M20.5 44V45M21.5 43V46M22.5 44V47M23.5 45V46M24.5 44V46M25.5 43V45M26.5 44V45M27.5 44V46M28.5 45V45M29.5 43V46M30.5 43V45M31.5 44V46M32.5 45V46M33.5 45V46M34.5 44V45M35.5 44V47M36.5 44V47M37.5 45V45M38.5 43V45M39.5 44V46M40.5 43V47M41.5 45V47M42.5 44V45M43.5 45V45M44.5 45V47M45.5 44V47M46.5 44V47M47.5 43V46M48.5 43V46M49.5 44V46M50.5 44V46M54.5 18V73M55.5 17V72M56.5 37V67M57.5 38V56M58.5 35V53M59.5 35V55M60.5 36V64M61.5 26V53M62.5 36V54M63.5 24V54M64.5 36V66M65.5 36V55M66.5 28V55M67.5 29V52M68.5 35V62M69.5 34V54M70.5 35V52M71.5 37V53M72.5 37V63M73.5 25V61M74.5 26V62M75.5 35V62M76.5 37V53M77.5 36V53M78.5 36V52M79.5 36V59M80.5 35V54M81.5 35V52M82.5 37V55M83.5 37V53M84.5 37V54M85.5 19V72M86.5 17V72M87.5 36V64M88.5 27V57M89.5 36V56M90.5 17V72M91.5 18V73M92.5 36V52M93.5 39V53M94.5 43V48M95.5 44V47M96.5 43V47M97.5 43V48M98.5 43V47M99.5 17V73M100.5 18V73M101.5 29V58M102.5 22V57M103.5 33V60M104.5 32V64M105.5 22V62M106.5 33V55M107.5 37V61M108.5 19V72M109.5 18V72M110.5 38V53M111.5 38V55M112.5 39V59M113.5 39V54M114.5 30V51M115.5 36V58M116.5 37V58M117.5 37V56M118.5 39V61M119.5 40V53M120.5 37V50M121.5 24V66M122.5 35V57M123.5 38V57M124.5 40V50M125.5 39V55M126.5 37V53M127.5 26V65M128.5 40V57M129.5 40V51M130.5 40V55M131.5 38V59M132.5 39V51M133.5 40V54M134.5 39V50M135.5 40V50M136.5 38V57M137.5 33V51M138.5 25V65M139.5 41V50M140.5 33V55M141.5 36V50M142.5 39V50M143.5 39V51M144.5 41V51M145.5 41V58M146.5 40V49M147.5 27V63M148.5 40V49M149.5 40V49M150.5 40V49M151.5 20V70M152.5 41V49M153.5 40V50M154.5 40V50M155.5 40V48M156.5 35V50M157.5 42V56M158.5 41V53M159.5 31V58M160.5 40V48M161.5 40V47M162.5 40V50M163.5 42V47M164.5 42V50M165.5 43V50M166.5 43V47M167.5 18V72M168.5 42V49M169.5 18V73M170.5 42V49M171.5 18V72M172.5 42V47M173.5 42V48M174.5 42V50M175.5 43V50M176.5 19V73M177.5 18V72M178.5 36V56M179.5 34V54M180.5 35V59M181.5 34V59M182.5 18V72M183.5 19V72M184.5 29V65M185.5 27V63M186.5 35V55M187.5 33V57M188.5 35V52M189.5 37V54M190.5 39V53M191.5 40V50M192.5 41V50M193.5 44V47M194.5 44V46M195.5 44V46M196.5 44V46M197.5 44V46M198.5 44V46M199.5 44V46M200.5 22V73M201.5 20V73M202.5 24V60M203.5 17V67M204.5 24V72M205.5 25V71M206.5 21V72M207.5 22V62M208.5 30V71M209.5 33V54M210.5 30V60M211.5 31V53M212.5 37V55M213.5 38V52M214.5 31V54M215.5 18V72M216.5 17V73M217.5 37V52M218.5 37V55M219.5 31V59M220.5 35V62M221.5 29V55M222.5 35V56M223.5 31V52M224.5 35V59M225.5 36V59M226.5 37V55M227.5 31V55M228.5 17V72M229.5 18V72M230.5 33V51M231.5 37V54M232.5 37V53M233.5 34V52M234.5 40V52M235.5 40V56M236.5 39V51M237.5 31V58M238.5 33V51M239.5 39V49M240.5 41V50M241.5 43V47M242.5 42V48M243.5 18V73M244.5 17V72M245.5 17V72M246.5 18V72M247.5 17V73M248.5 18V73M249.5 17V72M250.5 21V55M251.5 30V55M252.5 32V58M253.5 31V69M254.5 26V72M255.5 25V68M256.5 35V65M257.5 31V68M258.5 33V56M259.5 29V65M260.5 31V68M261.5 31V61M262.5 30V60M263.5 35V72M264.5 34V58M265.5 23V68M266.5 29V61M267.5 43V47M268.5 43V46M269.5 43V47M270.5 43V47M271.5 43V48M272.5 42V51M273.5 41V49M274.5 40V51M275.5 41V52M276.5 39V50M277.5 39V51M278.5 38V52M279.5 40V50M280.5 39V48M281.5 39V50M282.5 42V50M283.5 43V47M284.5 45V45M285.5 45V45M286.5 44V46M287.5 44V45M288.5 44V46M289.5 45V46M290.5 18V72M291.5 18V72M292.5 17V72M293.5 18V73M294.5 18V72M295.5 17V73M296.5 17V72M297.5 17V73M298.5 18V73M299.5 21V68M300.5 29V67M301.5 27V64M302.5 18V66M303.5 32V52M304.5 37V51M305.5 29V63M306.5 33V53M307.5 39V53M308.5 25V66M309.5 40V53M310.5 38V53M311.5 40V52M312.5 42V47M313.5 43V49M314.5 43V47M315.5 43V49M316.5 43V49M317.5 43V47M318.5 43V47M319.5 37V67M320.5 25V55M321.5 23V59M322.5 25V67M323.5 27V63M324.5 17V72M325.5 18V72M326.5 17V73M327.5 17V73M328.5 18V73M329.5 17V73M330.5 18V73M331.5 17V72M332.5 17V72M333.5 28V60M334.5 21V61M335.5 17V69M336.5 21V63M337.5 32V59M338.5 23V66M339.5 21V57M340.5 27V59M341.5 21V56M342.5 17V62M343.5 27V63M344.5 31V72M345.5 27V65M346.5 20V67M347.5 19V69M348.5 26V73M349.5 21V70M350.5 23V68M351.5 27V60M352.5 20V60M353.5 22V72M354.5 30V71M355.5 30V65M356.5 19V68" stroke="#3d80db" stroke-width="1" fill="none"/></svg><svg style="left:0;top:0" width="357" height="74" viewBox="0 0 357 74"><polyline points="0,45.5 75,45.5 148,44 216,35.5 241,44.5 357,44.5" fill="none" stroke="#000" stroke-width="1.15"/><rect x="145" y="40.5" width="6" height="6" fill="#3c3c3c" shape-rendering="crispEdges"/><rect x="213" y="32" width="6" height="6" fill="#3c3c3c" shape-rendering="crispEdges"/><rect x="238" y="41" width="6" height="6" fill="#3c3c3c" shape-rendering="crispEdges"/></svg></div>
<div class="a" style="left:246px;top:433px;width:530px;height:76px;background:#fff;"></div><div class="clip" style="left:248px;top:433px;width:528px;height:74px;"><div class="chead"></div><div class="ico" style="left:0;top:2px;"></div><svg style="left:2px;top:2px" width="12" height="16" viewBox="0 0 12 16" shape-rendering="crispEdges"><path d="M0.5 7V9M1.5 6V10M2.5 2V14M3.5 5V11M4.5 7V9M5.5 5V11M6.5 4V12M7.5 6V10M8.5 7V9M9.5 6V10M10.5 7V9" stroke="#008a00" stroke-width="1" fill="none"/></svg><div class="cname">koto-sw</div><svg style="left:0;top:0" width="528" height="74" viewBox="0 0 528 74" shape-rendering="crispEdges"><path d="M0.5 33V57M1.5 31V60M2.5 29V62M3.5 33V56M4.5 31V57M5.5 33V57M6.5 34V55M7.5 32V60M8.5 31V60M9.5 29V60M10.5 20V69M11.5 23V66M12.5 20V73M13.5 23V64M14.5 31V60M15.5 31V61M16.5 33V58M17.5 31V58M18.5 33V57M19.5 33V57M20.5 34V55M21.5 31V59M22.5 31V60M23.5 30V59M24.5 29V62M25.5 29V63M26.5 29V62M27.5 31V59M28.5 30V61M29.5 31V59M30.5 30V61M31.5 30V62M32.5 27V65M33.5 30V62M34.5 26V65M35.5 26V61M36.5 26V64M37.5 31V59M38.5 32V59M39.5 34V55M40.5 37V52M41.5 37V53M42.5 35V56M43.5 32V56M44.5 31V60M45.5 29V61M46.5 29V62M47.5 28V61M48.5 32V60M49.5 34V57M50.5 34V56M51.5 33V57M52.5 36V55M53.5 33V57M54.5 34V56M55.5 33V58M56.5 34V55M57.5 33V59M58.5 30V58M59.5 28V59M60.5 29V60M61.5 29V61M62.5 31V59M63.5 28V64M64.5 30V59M65.5 28V64M66.5 31V61M67.5 27V62M68.5 31V60M69.5 28V60M70.5 31V58M71.5 29V59M72.5 29V61M73.5 27V61M74.5 25V68M75.5 27V65M76.5 30V62M77.5 30V61M78.5 32V58M79.5 34V55M80.5 37V53M81.5 18V72M82.5 18V72M83.5 18V72M84.5 18V72M85.5 18V72M86.5 18V72M87.5 18V72M88.5 18V72M89.5 18V72M90.5 18V72M91.5 18V72M92.5 18V72M93.5 18V72M94.5 18V72M95.5 18V72M96.5 18V72M97.5 18V72M98.5 18V72M99.5 18V72M100.5 18V72M101.5 18V72M102.5 18V72M103.5 18V72M104.5 18V72M105.5 18V72M106.5 18V72M107.5 16V74M108.5 18V72M109.5 18V72M110.5 18V72M111.5 18V72M112.5 18V72M113.5 18V72M114.5 18V72M115.5 18V72M116.5 18V72M117.5 18V72M118.5 18V72M119.5 18V72M120.5 18V72M121.5 18V72M122.5 18V72M123.5 18V72M124.5 18V72M125.5 18V72M126.5 18V72M127.5 18V72M128.5 18V72M129.5 18V72M130.5 18V72M131.5 18V72M132.5 18V72M133.5 18V72M134.5 18V72M135.5 18V72M136.5 18V72M137.5 18V72M138.5 18V72M139.5 18V72M140.5 18V72M141.5 18V72M142.5 18V72M143.5 18V72M144.5 18V72M145.5 18V72M146.5 18V72M147.5 18V72M148.5 18V72M149.5 18V72M150.5 18V72M151.5 18V72M152.5 18V72M153.5 18V72M154.5 18V72M155.5 18V72M156.5 18V72M157.5 18V72M158.5 18V72M159.5 18V72M160.5 18V72M161.5 18V72M162.5 18V72M163.5 18V72M164.5 18V72M165.5 18V72M166.5 18V72M167.5 18V72M168.5 18V72M169.5 18V72M170.5 18V72M171.5 18V72M172.5 18V72M173.5 18V72M174.5 18V72M175.5 18V72M176.5 18V72M177.5 18V72M178.5 18V72M179.5 18V72M180.5 18V72M181.5 18V72M182.5 18V72M183.5 18V72M184.5 18V72M185.5 18V72M186.5 18V72M187.5 18V72M188.5 18V72M189.5 18V72M190.5 18V72M191.5 18V72M192.5 18V72M193.5 18V72M194.5 18V72M195.5 18V72M196.5 18V72M197.5 18V72M198.5 18V72M199.5 18V72M200.5 18V72M201.5 18V72M202.5 18V72M203.5 18V72M204.5 18V72M205.5 18V72M206.5 18V72M207.5 18V72M208.5 18V72M209.5 18V72M210.5 18V72M211.5 18V72M212.5 18V72M213.5 18V72M214.5 18V72M215.5 18V72M216.5 18V72M217.5 18V72M218.5 18V72M219.5 18V72M220.5 18V72M221.5 18V72M222.5 18V72M223.5 18V72M224.5 18V72M225.5 18V72M226.5 18V72M227.5 18V72M228.5 18V72M229.5 18V72M230.5 18V72M231.5 18V72M232.5 18V72M233.5 18V72M234.5 18V72M235.5 18V72M236.5 18V72M237.5 18V72M238.5 18V72M239.5 18V72M240.5 18V72M241.5 18V72M242.5 18V72M243.5 18V72M244.5 18V72M245.5 18V72M246.5 18V72M247.5 18V72M248.5 18V72M249.5 18V72M250.5 18V72M251.5 18V72M252.5 18V72M253.5 18V72M254.5 18V72M255.5 18V72M256.5 18V72M257.5 18V72M258.5 18V72M259.5 18V72M260.5 18V72M261.5 18V72M262.5 18V72M263.5 18V72M264.5 18V72M265.5 18V72M266.5 18V72M267.5 18V72M268.5 18V72M269.5 18V72M270.5 18V72M271.5 18V72M272.5 18V72M273.5 18V72M274.5 18V72M275.5 18V72M276.5 18V72M277.5 18V72M278.5 18V72M279.5 18V72M280.5 18V72M281.5 18V72M282.5 18V72M283.5 18V72M284.5 18V72M285.5 18V72M286.5 18V72M287.5 18V72M288.5 18V72M289.5 18V72M290.5 18V72M291.5 18V72M292.5 18V72M293.5 18V72M294.5 18V72M295.5 18V72M296.5 18V72M297.5 18V72M298.5 18V72M299.5 18V72M300.5 18V72M301.5 18V72M302.5 18V72M303.5 18V72M304.5 18V72M305.5 18V72M306.5 18V72M307.5 18V72M308.5 18V72M309.5 18V72M310.5 18V72M311.5 18V72M312.5 18V72M313.5 18V72M314.5 18V72M315.5 18V72M316.5 18V72M317.5 18V72M318.5 18V72M319.5 18V72M320.5 18V72M321.5 18V72M322.5 18V72M323.5 18V72M324.5 18V72M325.5 18V72M326.5 18V72M327.5 18V72M328.5 18V72M329.5 18V72M330.5 18V72M331.5 18V72M332.5 18V72M333.5 18V72M334.5 18V72M335.5 18V72M336.5 18V72M337.5 18V72M338.5 18V72M339.5 18V72M340.5 18V72M341.5 18V72M342.5 18V72M343.5 18V72M344.5 18V72M345.5 18V72M346.5 18V72M347.5 18V72M348.5 18V72M349.5 18V72M350.5 18V72M351.5 18V72M352.5 18V72M353.5 18V72M354.5 18V72M355.5 18V72M356.5 18V72M357.5 18V72M358.5 18V72M359.5 18V72M360.5 18V72M361.5 18V72M362.5 18V72M363.5 18V72M364.5 18V72M365.5 18V72M366.5 18V72M367.5 18V72M368.5 18V72M369.5 18V72M370.5 18V72M371.5 18V72M372.5 18V72M373.5 18V72M374.5 18V72M375.5 18V72M376.5 18V72M377.5 18V72M378.5 18V72M379.5 18V72M380.5 20V70M381.5 21V69M382.5 25V65M383.5 23V67M384.5 25V65M385.5 28V62M386.5 25V65M387.5 25V65M388.5 28V62M389.5 27V63M390.5 29V61M391.5 29V61M392.5 28V62M393.5 27V63M394.5 27V63M395.5 28V62M396.5 29V61M397.5 28V62M398.5 26V64M399.5 26V64M400.5 29V61M401.5 29V61M402.5 26V64M403.5 27V63M404.5 23V67M405.5 20V70M406.5 25V65M407.5 24V66M408.5 25V65M409.5 26V64M410.5 27V63M411.5 27V63M412.5 29V61M413.5 25V65M414.5 25V65M415.5 29V61M416.5 24V66M417.5 26V64M418.5 27V63M419.5 27V63M420.5 22V68M421.5 23V67M422.5 27V63M423.5 27V63M424.5 27V63M425.5 25V65M426.5 29V61M427.5 26V64M428.5 29V61M429.5 29V61M430.5 30V60M431.5 28V62M432.5 27V63M433.5 29V61M434.5 30V60M435.5 30V60M436.5 30V60M437.5 29V61M438.5 29V61M439.5 28V62M440.5 29V61M441.5 27V63M442.5 27V63M443.5 23V67M444.5 26V64M445.5 23V67M446.5 25V65M447.5 27V63M448.5 23V67M449.5 23V67M450.5 18V72M451.5 18V72M452.5 18V72M453.5 18V72M454.5 18V72M455.5 18V72M456.5 18V72M457.5 28V62M458.5 29V61M459.5 18V72M460.5 18V72M461.5 18V72M462.5 18V72M463.5 18V72M464.5 18V72M465.5 18V72M466.5 18V72M467.5 18V72M468.5 18V72M469.5 18V72M470.5 18V72M471.5 18V72M472.5 18V72M473.5 18V72M474.5 18V72M475.5 18V72M476.5 18V72M477.5 18V72M478.5 18V72M479.5 18V72M480.5 18V72M481.5 18V72M482.5 18V72M483.5 18V72M484.5 18V72M485.5 26V64M486.5 18V72M487.5 18V72M488.5 18V72M489.5 18V72M490.5 18V72M491.5 18V72M492.5 18V72M493.5 18V72M494.5 25V65M495.5 18V72M496.5 18V72M497.5 18V72M498.5 18V72M499.5 18V72M500.5 18V72M501.5 18V72M502.5 18V72M503.5 18V72M504.5 18V72M505.5 18V72M506.5 27V63M507.5 18V72M508.5 18V72M509.5 18V72M510.5 18V72M511.5 18V72M512.5 18V72M513.5 18V72M514.5 28V62M515.5 18V72M516.5 18V72M517.5 18V72M518.5 18V72M519.5 18V72M520.5 18V72M521.5 18V72M522.5 18V72M523.5 27V63M524.5 18V72M525.5 18V72M526.5 18V72M527.5 18V72" stroke="#3d80db" stroke-width="1" fill="none"/></svg><svg style="left:0;top:0" width="528" height="74" viewBox="0 0 528 74"><polyline points="0,45.5 528,45.5" fill="none" stroke="#000" stroke-width="1.15"/></svg></div>
<div class="a" style="left:186px;top:511px;width:590px;height:76px;background:#fff;"></div><div class="clip" style="left:188px;top:511px;width:588px;height:74px;"><div class="chead sel"></div><div class="ico" style="left:0;top:2px;width:15px;height:15px;"></div><svg style="left:1px;top:2px" width="12" height="16" viewBox="0 0 12 16" shape-rendering="crispEdges"><path d="M0.5 7V9M1.5 6V10M2.5 2V14M3.5 5V11M4.5 7V9M5.5 5V11M6.5 4V12M7.5 6V10M8.5 7V9M9.5 6V10M10.5 7V9" stroke="#008a00" stroke-width="1" fill="none"/></svg><div class="cname" style="left:17px;">_0</div><svg style="left:0;top:0" width="588" height="74" viewBox="0 0 588 74" shape-rendering="crispEdges"><path d="M0.5 44V45M1.5 44V46M2.5 45V45M3.5 44V45M4.5 41V49M5.5 42V47M6.5 44V46M7.5 37V52M8.5 39V51M9.5 42V48M10.5 43V46M11.5 24V67M12.5 23V69M13.5 37V54M14.5 37V54M15.5 21V63M16.5 26V70M17.5 36V53M18.5 37V53M19.5 41V50M20.5 28V59M21.5 29V62M22.5 37V52M23.5 38V52M24.5 40V50M25.5 42V48M26.5 43V47M27.5 30V59M28.5 33V60M29.5 39V52M30.5 38V53M31.5 41V50M32.5 42V48M33.5 43V47M34.5 41V49M35.5 41V50M36.5 42V49M37.5 43V47M38.5 44V46M39.5 44V46M40.5 44V45M41.5 40V50M42.5 39V54M43.5 38V51M44.5 40V49M45.5 42V49M46.5 42V48M47.5 43V47M48.5 44V47M49.5 44V46M50.5 44V46M51.5 44V46M52.5 45V45M53.5 38V52M54.5 35V55M55.5 38V54M56.5 39V51M57.5 39V50M58.5 41V49M59.5 41V48M60.5 42V48M61.5 42V47M62.5 43V47M63.5 43V47M64.5 43V47M65.5 44V46M66.5 44V46M67.5 44V46M68.5 45V46M69.5 45V45M70.5 45V46M71.5 45V45M72.5 45V45M73.5 35V55M74.5 30V57M75.5 34V56M76.5 36V54M77.5 36V55M78.5 37V54M79.5 38V53M80.5 39V52M81.5 39V50M82.5 39V49M83.5 41V50M84.5 41V49M85.5 42V48M86.5 42V48M87.5 42V47M88.5 42V48M89.5 43V47M90.5 43V47M91.5 43V47M92.5 44V47M93.5 44V46M94.5 44V46M95.5 44V46M96.5 45V45M97.5 45V46M98.5 45V45M99.5 45V46M100.5 45V46M101.5 45V46M102.5 44V45M103.5 44V45M104.5 44V45M105.5 44V45M106.5 44V45M107.5 40V51M108.5 40V51M109.5 40V51M110.5 40V50M111.5 38V51M112.5 41V48M113.5 29V63M114.5 31V64M115.5 26V60M116.5 18V71M117.5 21V70M118.5 17V66M119.5 20V67M120.5 33V55M121.5 33V54M122.5 24V63M123.5 25V66M124.5 43V47M125.5 36V55M126.5 37V53M127.5 40V50M128.5 42V48M129.5 43V46M130.5 45V46M131.5 36V54M132.5 33V58M133.5 36V53M134.5 39V52M135.5 40V50M136.5 42V48M137.5 42V47M138.5 43V47M139.5 39V53M140.5 36V52M141.5 38V51M142.5 40V51M143.5 41V49M144.5 42V48M145.5 43V47M146.5 44V47M147.5 41V50M148.5 39V50M149.5 41V49M150.5 42V48M151.5 43V47M152.5 44V46M153.5 34V55M154.5 31V57M155.5 34V53M156.5 38V52M157.5 40V50M158.5 41V49M159.5 41V49M160.5 42V47M161.5 43V47M162.5 35V54M163.5 35V56M164.5 37V56M165.5 37V53M166.5 40V52M167.5 41V50M168.5 42V49M169.5 42V47M170.5 43V47M171.5 43V47M172.5 44V47M173.5 44V46M174.5 36V54M175.5 34V55M176.5 37V53M177.5 37V52M178.5 38V51M179.5 40V51M180.5 41V50M181.5 41V49M182.5 41V48M183.5 43V48M184.5 43V47M185.5 43V47M186.5 43V47M187.5 43V46M188.5 44V46M189.5 44V45M190.5 44V46M191.5 44V46M192.5 44V45M193.5 32V56M194.5 29V63M195.5 29V59M196.5 31V61M197.5 30V60M198.5 33V58M199.5 35V56M200.5 35V54M201.5 38V54M202.5 36V53M203.5 38V51M204.5 39V51M205.5 39V52M206.5 39V49M207.5 41V50M208.5 41V50M209.5 41V49M210.5 41V48M211.5 42V48M212.5 42V48M213.5 42V47M214.5 42V47M215.5 43V47M216.5 43V47M217.5 43V47M218.5 44V47M219.5 44V45M220.5 44V46M221.5 45V46M222.5 44V46M223.5 44V45M224.5 45V46M225.5 44V46M226.5 44V45M227.5 44V45M228.5 40V49M229.5 39V51M230.5 40V50M231.5 41V48M232.5 43V47M233.5 43V47M234.5 44V46M235.5 44V46M236.5 44V46M237.5 45V46M238.5 40V51M239.5 38V53M240.5 40V51M241.5 40V50M242.5 42V48M243.5 43V48M244.5 43V47M245.5 43V46M246.5 44V46M247.5 44V46M248.5 45V45M249.5 44V45M250.5 30V60M251.5 29V59M252.5 29V59M253.5 28V64M254.5 35V55M255.5 28V62M256.5 27V62M257.5 25V65M258.5 26V64M259.5 27V62M260.5 28V61M261.5 34V54M262.5 24V65M263.5 23V69M264.5 26V67M265.5 35V55M266.5 30V58M267.5 31V61M268.5 29V64M269.5 28V63M270.5 28V62M271.5 32V58M272.5 35V55M273.5 37V53M274.5 32V58M275.5 31V61M276.5 27V61M277.5 29V57M278.5 34V55M279.5 29V62M280.5 25V65M281.5 24V62M282.5 26V65M283.5 24V67M284.5 25V64M285.5 27V63M286.5 27V66M287.5 38V53M288.5 39V53M289.5 40V50M290.5 41V49M291.5 39V50M292.5 40V51M293.5 38V51M294.5 38V53M295.5 39V52M296.5 37V52M297.5 37V54M298.5 37V53M299.5 36V53M300.5 38V53M301.5 38V52M302.5 37V54M303.5 38V52M304.5 37V53M305.5 39V51M306.5 37V52M307.5 38V52M308.5 38V52M309.5 39V51M310.5 40V51M311.5 40V49M312.5 33V57M313.5 35V59M314.5 35V58M315.5 35V58M316.5 37V54M317.5 29V57M318.5 32V61M319.5 31V60M320.5 26V72M321.5 21V70M322.5 23V66M323.5 37V54M324.5 30V58M325.5 27V62M326.5 30V62M327.5 31V64M328.5 29V63M329.5 28V61M330.5 34V55M331.5 22V67M332.5 21V66M333.5 23V63M334.5 34V55M335.5 28V62M336.5 29V65M337.5 29V65M338.5 20V68M339.5 22V71M340.5 18V65M341.5 35V56M342.5 31V59M343.5 28V62M344.5 30V63M345.5 28V59M346.5 28V62M347.5 29V58M348.5 36V55M349.5 24V67M350.5 27V66M351.5 27V66M352.5 37V55M353.5 30V56M354.5 31V59M355.5 30V60M356.5 29V61M357.5 35V55M358.5 23V64M359.5 22V65M360.5 22V65M361.5 37V52M362.5 32V57M363.5 33V60M364.5 31V58M365.5 32V58M366.5 33V58M367.5 32V57M368.5 38V52M369.5 40V51M370.5 37V52M371.5 37V54M372.5 34V55M373.5 33V54M374.5 37V54M375.5 34V54M376.5 35V53M377.5 37V54M378.5 40V51M379.5 41V49M380.5 38V51M381.5 36V52M382.5 36V55M383.5 36V55M384.5 36V53M385.5 37V53M386.5 40V50M387.5 41V49M388.5 39V51M389.5 37V52M390.5 37V51M391.5 39V51M392.5 25V66M393.5 29V63M394.5 41V49M395.5 38V51M396.5 40V49M397.5 41V49M398.5 42V48M399.5 43V47M400.5 43V47M401.5 43V47M402.5 44V46M403.5 44V46M404.5 44V46M405.5 44V46M406.5 45V46M407.5 43V47M408.5 42V48M409.5 42V48M410.5 41V48M411.5 42V48M412.5 42V49M413.5 42V48M414.5 43V47M415.5 44V45M416.5 44V46M417.5 45V46M418.5 38V53M419.5 37V54M420.5 39V51M421.5 40V50M422.5 41V48M423.5 42V47M424.5 43V47M425.5 44V47M426.5 44V46M427.5 44V46M428.5 44V46M429.5 40V50M430.5 40V50M431.5 41V49M432.5 43V48M433.5 43V47M434.5 44V46M435.5 44V46M436.5 45V46M437.5 44V45M438.5 43V47M439.5 43V47M440.5 43V47M441.5 44V45M442.5 45V46M443.5 36V55M444.5 35V55M445.5 36V53M446.5 29V64M447.5 30V60M448.5 41V49M449.5 37V53M450.5 36V53M451.5 40V50M452.5 42V49M453.5 29V61M454.5 25V65M455.5 24V64M456.5 35V53M457.5 35V55M458.5 35V56M459.5 38V53M460.5 40V51M461.5 38V53M462.5 39V52M463.5 40V50M464.5 42V48M465.5 43V48M466.5 43V47M467.5 43V47M468.5 32V59M469.5 25V68M470.5 23V65M471.5 19V69M472.5 25V64M473.5 29V58M474.5 33V56M475.5 33V58M476.5 34V55M477.5 36V55M478.5 37V53M479.5 38V54M480.5 37V53M481.5 36V55M482.5 38V51M483.5 39V50M484.5 40V50M485.5 41V50M486.5 40V51M487.5 40V52M488.5 41V50M489.5 40V49M490.5 41V49M491.5 41V48M492.5 42V47M493.5 42V48M494.5 42V47M495.5 21V67M496.5 25V69M497.5 24V70M498.5 33V57M499.5 30V58M500.5 32V57M501.5 36V56M502.5 35V54M503.5 34V54M504.5 38V54M505.5 39V51M506.5 35V54M507.5 36V57M508.5 37V53M509.5 38V50M510.5 38V51M511.5 38V54M512.5 36V55M513.5 38V53M514.5 38V51M515.5 38V52M516.5 37V53M517.5 34V54M518.5 37V54M519.5 38V51M520.5 39V50M521.5 39V49M522.5 40V50M523.5 40V52M524.5 40V49M525.5 42V48M526.5 41V48M527.5 41V48M528.5 20V67M529.5 20V70M530.5 23V71M531.5 35V56M532.5 29V62M533.5 33V57M534.5 36V55M535.5 37V52M536.5 36V52M537.5 36V54M538.5 39V53M539.5 40V50M540.5 22V63M541.5 25V64M542.5 24V69M543.5 36V56M544.5 30V58M545.5 33V56M546.5 37V55M547.5 38V53M548.5 37V52M549.5 37V55M550.5 38V50M551.5 39V51M552.5 22V66M553.5 25V66M554.5 22V67M555.5 35V56M556.5 34V56M557.5 35V54M558.5 36V53M559.5 37V51M560.5 37V52M561.5 37V53M562.5 38V51M563.5 39V51M564.5 36V52M565.5 36V54M566.5 38V54M567.5 38V51M568.5 39V51M569.5 37V52M570.5 38V54M571.5 40V51M572.5 41V50M573.5 40V50M574.5 38V51M575.5 37V54M576.5 40V50M577.5 41V48M578.5 41V49M579.5 40V50M580.5 41V49M581.5 42V49M582.5 41V48M583.5 42V48M584.5 26V70M585.5 26V71M586.5 25V65M587.5 24V67" stroke="#3d80db" stroke-width="1" fill="none"/></svg><svg style="left:0;top:0" width="588" height="74" viewBox="0 0 588 74"><polyline points="0,45.5 588,45.5" fill="none" stroke="#e8e800" stroke-width="1.15"/></svg></div><div class="a" style="left:187px;top:512px;width:589px;height:74px;box-sizing:border-box;border:1px solid #585878;border-right:none;border-radius:2px 0 0 2px;"></div>
<div class="a" style="left:186px;top:588px;width:589px;height:69px;box-sizing:border-box;border:1px solid #f0f000;border-bottom:none;"></div>
<div class="a" style="left:593px;top:120px;width:1px;height:537px;background:#f4f4f4;"></div>
<svg style="left:587px;top:98px" width="12" height="19" viewBox="0 0 12 19"><path d="M0 0H12V12L6 18.500L0 12Z" fill="#3c62cc"/><path d="M4.500 3V10M7.500 3V10" stroke="#d0dcf8" stroke-width="1"/></svg>
<div class="a" style="left:779px;top:98px;width:23px;height:387px;background:linear-gradient(90deg,#ececf2,#fcfcfe 50%,#fff);"></div>
<div class="btn2" style="left:780px;top:99px;width:21px;height:15px;"></div>
<svg style="left:786px;top:103px" width="9" height="6" viewBox="0 0 9 6"><path d="M1 5L4.500 1.500L8 5" fill="none" stroke="#303038" stroke-width="2"/></svg>
<div class="a" style="left:780px;top:116px;width:21px;height:243px;box-sizing:border-box;border:1px solid;border-color:#fff #8c8c98 #8c8c98 #fff;border-radius:2px;background:linear-gradient(90deg,#fafafc,#e8e8f0 50%,#c8c8d8);box-shadow:0 0 0 1px #c0c0cc;"></div>
<div class="a" style="left:786px;top:233px;width:8px;height:1px;background:#8c8c98;box-shadow:0 2px 0 #8c8c98,0 4px 0 #8c8c98,0 6px 0 #8c8c98;"></div>
<div class="btn2" style="left:780px;top:469px;width:21px;height:15px;"></div>
<svg style="left:786px;top:474px" width="9" height="6" viewBox="0 0 9 6"><path d="M1 1L4.500 4.500L8 1" fill="none" stroke="#303038" stroke-width="2"/></svg>
<div class="btn" style="left:779px;top:486px;width:23px;height:33px;"></div>
<div class="btn" style="left:779px;top:520px;width:23px;height:33px;"></div>
<div class="btn" style="left:779px;top:555px;width:23px;height:33px;"></div>
<div class="btn" style="left:779px;top:590px;width:23px;height:33px;"></div>
<div class="btn" style="left:779px;top:625px;width:23px;height:33px;"></div>
<div class="a" style="left:778px;top:485px;width:25px;height:35px;box-sizing:border-box;border:1px solid #e8a020;"></div><div class="a" style="left:780px;top:487px;width:21px;height:31px;box-sizing:border-box;border:1px dotted #000;"></div>
<svg style="left:778px;top:490px" width="24" height="24" viewBox="-10 -10 24 24"><path d="M3.200 3.200L9.300 8.800" stroke="#a85a2c" stroke-width="2.400" stroke-linecap="round"/><path d="M3 3L5 4.800" stroke="#505860" stroke-width="1.800"/><circle cx="0" cy="0" r="4.300" fill="#e2f2ee" stroke="#4c6c7c" stroke-width="1.300"/><path d="M-2.500 0H2.500M0 -2.500V2.500" stroke="#000" stroke-width="1.200"/><path d="M9 -4.500V3M7.200 -2.800L9 -5L10.800 -2.800M7.200 1.300L9 3.500L10.800 1.300" stroke="#000" stroke-width="1.100" fill="none"/></svg>
<svg style="left:778px;top:525px" width="24" height="24" viewBox="-10 -10 24 24"><path d="M3.200 3.200L9.300 8.800" stroke="#a85a2c" stroke-width="2.400" stroke-linecap="round"/><path d="M3 3L5 4.800" stroke="#505860" stroke-width="1.800"/><circle cx="0" cy="0" r="4.300" fill="#e2f2ee" stroke="#4c6c7c" stroke-width="1.300"/><path d="M-2.500 0H2.500" stroke="#000" stroke-width="1.200"/><path d="M9 -4.500V3M7.200 -2.800L9 -5L10.800 -2.800M7.200 1.300L9 3.500L10.800 1.300" stroke="#000" stroke-width="1.100" fill="none"/></svg>
<svg style="left:779px;top:562px" width="24" height="24" viewBox="-10 -10 24 24"><path d="M3.200 3.200L9.300 8.800" stroke="#a85a2c" stroke-width="2.400" stroke-linecap="round"/><path d="M3 3L5 4.800" stroke="#505860" stroke-width="1.800"/><circle cx="0" cy="0" r="4.300" fill="#e2f2ee" stroke="#4c6c7c" stroke-width="1.300"/><path d="M0 -8V8M-2.200 -5.500L0 -8.500L2.200 -5.500M-2.200 5.500L0 8.500L2.200 5.500" stroke="#000" stroke-width="1.300" fill="none"/></svg>
<svg style="left:784px;top:597px" width="13" height="20" viewBox="0 0 13 20"><rect x="1.500" y="1.500" width="10" height="3" fill="#fff" stroke="#a0a0a8" stroke-width="1"/><rect x="2" y="2" width="4" height="2" fill="#4868d0"/><path d="M6.500 6L12 12.500H8.500V18.500H4.500V12.500H1Z" fill="#88d838" stroke="#1c9c1c" stroke-width="1"/></svg>
<svg style="left:784px;top:632px" width="13" height="20" viewBox="0 0 13 20"><rect x="1.500" y="15.500" width="10" height="3" fill="#fff" stroke="#a0a0a8" stroke-width="1"/><rect x="2" y="16" width="4" height="2" fill="#4868d0"/><path d="M6.500 14L12 7.500H8.500V1.500H4.500V7.500H1Z" fill="#88d838" stroke="#1c9c1c" stroke-width="1"/></svg>
<svg style="left:4px;top:662px" width="17" height="17" viewBox="0 0 17 17"><path d="M.5 1.500L2 2L3.500 5L5.500 1.500L7.500 8L9.500 4.500L12 15L14 11.500L15.500 15.500" fill="none" stroke="#808080" stroke-width="1.300"/></svg>
<div class="a" style="left:24px;top:662px;width:160px;height:21px;box-sizing:border-box;border:1px solid #7f9db9;background:#fff;"></div>
<div class="t" style="left:28px;top:666px;">Volume</div>
<div class="a" style="left:167px;top:664px;width:15px;height:17px;box-sizing:border-box;border:1px solid #b0b8d0;border-radius:2px;background:linear-gradient(#f4f4f8,#d4d8e4);"></div>
<svg style="left:170px;top:670px" width="9" height="6" viewBox="0 0 9 6"><path d="M1 1L4.500 4.500L8 1" fill="none" stroke="#303038" stroke-width="2"/></svg>
<div class="a" style="left:185px;top:661px;width:382px;height:23px;background:linear-gradient(#ececf2,#fcfcfe 50%,#fff);"></div>
<div class="btn2" style="left:186px;top:662px;width:14px;height:21px;"></div>
<svg style="left:190px;top:668px" width="6" height="9" viewBox="0 0 6 9"><path d="M5 1L1.500 4.500L5 8" fill="none" stroke="#303038" stroke-width="2"/></svg>
<div class="a" style="left:201px;top:662px;width:92px;height:21px;box-sizing:border-box;border:1px solid;border-color:#fff #8c8c98 #8c8c98 #fff;border-radius:2px;background:linear-gradient(#fafafc,#e8e8f0 50%,#c8c8d8);box-shadow:0 0 0 1px #c0c0cc;"></div>
<div class="a" style="left:244px;top:669px;width:1px;height:7px;background:#8c8c98;box-shadow:2px 0 0 #8c8c98,4px 0 0 #8c8c98,6px 0 0 #8c8c98;"></div>
<div class="btn2" style="left:551px;top:662px;width:15px;height:21px;"></div>
<svg style="left:556px;top:668px" width="6" height="9" viewBox="0 0 6 9"><path d="M1 1L4.500 4.500L1 8" fill="none" stroke="#303038" stroke-width="2"/></svg>
<div class="btn" style="left:568px;top:661px;width:32px;height:23px;"></div>
<div class="btn" style="left:603px;top:661px;width:32px;height:23px;"></div>
<div class="btn" style="left:638px;top:661px;width:32px;height:23px;"></div>
<div class="btn" style="left:673px;top:661px;width:32px;height:23px;"></div>
<div class="btn" style="left:708px;top:661px;width:32px;height:23px;"></div>
<div class="btn" style="left:743px;top:661px;width:32px;height:23px;"></div>
<div class="btn" style="left:778px;top:660px;width:24px;height:24px;"></div>
<svg style="left:571.5px;top:661px" width="24" height="24" viewBox="-10 -10 24 24"><path d="M3.200 3.200L9.300 8.800" stroke="#a85a2c" stroke-width="2.400" stroke-linecap="round"/><path d="M3 3L5 4.800" stroke="#505860" stroke-width="1.800"/><circle cx="0" cy="0" r="4.300" fill="#e2f2ee" stroke="#4c6c7c" stroke-width="1.300"/><path d="M-2.500 0H2.500M0 -2.500V2.500" stroke="#000" stroke-width="1.200"/><path d="M-4.500 7.500H3M-2.800 5.700L-5 7.500L-2.800 9.300M1.300 5.700L3.500 7.500L1.300 9.300" stroke="#000" stroke-width="1.100" fill="none"/></svg>
<svg style="left:606.5px;top:661px" width="24" height="24" viewBox="-10 -10 24 24"><path d="M3.200 3.200L9.300 8.800" stroke="#a85a2c" stroke-width="2.400" stroke-linecap="round"/><path d="M3 3L5 4.800" stroke="#505860" stroke-width="1.800"/><circle cx="0" cy="0" r="4.300" fill="#e2f2ee" stroke="#4c6c7c" stroke-width="1.300"/><path d="M-2.500 0H2.500" stroke="#000" stroke-width="1.200"/><path d="M-4.500 7.500H3M-2.800 5.700L-5 7.500L-2.800 9.300M1.300 5.700L3.500 7.500L1.300 9.300" stroke="#000" stroke-width="1.100" fill="none"/></svg>
<svg style="left:642px;top:660.5px" width="24" height="24" viewBox="-10 -10 24 24"><path d="M3.200 3.200L9.300 8.800" stroke="#a85a2c" stroke-width="2.400" stroke-linecap="round"/><path d="M3 3L5 4.800" stroke="#505860" stroke-width="1.800"/><circle cx="0" cy="0" r="4.300" fill="#e2f2ee" stroke="#4c6c7c" stroke-width="1.300"/></svg>
<svg style="left:679px;top:661.5px" width="24" height="24" viewBox="-10 -10 24 24"><path d="M3.200 3.200L9.300 8.800" stroke="#a85a2c" stroke-width="2.400" stroke-linecap="round"/><path d="M3 3L5 4.800" stroke="#505860" stroke-width="1.800"/><circle cx="0" cy="0" r="4.300" fill="#e2f2ee" stroke="#4c6c7c" stroke-width="1.300"/><path d="M-8 0H8M-5.500 -2.200L-8.500 0L-5.500 2.200M5.500 -2.200L8.500 0L5.500 2.200" stroke="#000" stroke-width="1.300" fill="none"/></svg>
<svg style="left:713px;top:665px" width="22" height="16" viewBox="0 0 22 16"><rect x=".5" y="2.500" width="3" height="11" fill="#fff" stroke="#a0a0a8" stroke-width="1"/><path d="M6 8L13 1.500V5.500H21.500V10.500H13V14.500Z" fill="#88d038" stroke="#1c901c" stroke-width="1"/></svg>
<svg style="left:748px;top:665px" width="22" height="16" viewBox="0 0 22 16"><rect x="18.500" y="2.500" width="3" height="11" fill="#fff" stroke="#a0a0a8" stroke-width="1"/><path d="M16 8L9 1.500V5.500H.5V10.500H9V14.500Z" fill="#88d038" stroke="#1c901c" stroke-width="1"/></svg>
<svg style="left:778.5px;top:661.5px" width="24" height="24" viewBox="-10 -10 24 24"><path d="M3.200 3.200L9.300 8.800" stroke="#a85a2c" stroke-width="2.400" stroke-linecap="round"/><path d="M3 3L5 4.800" stroke="#505860" stroke-width="1.800"/><circle cx="0" cy="0" r="4.300" fill="#e2f2ee" stroke="#4c6c7c" stroke-width="1.300"/><path d="M0 -8V8M-2.200 -5.500L0 -8.500L2.200 -5.500M-2.200 5.500L0 8.500L2.200 5.500" stroke="#000" stroke-width="1.300" fill="none"/><path d="M-8 0H8M-5.500 -2.200L-8.500 0L-5.500 2.200M5.500 -2.200L8.500 0L5.500 2.200" stroke="#000" stroke-width="1.300" fill="none"/></svg>
<div class="a" style="left:803px;top:98px;width:139px;height:1px;background:#a8a8a4;"></div><div class="a" style="left:803px;top:99px;width:137px;height:1px;background:#84847c;"></div><div class="a" style="left:803px;top:99px;width:1px;height:584px;background:#74746c;"></div>
<div class="a" style="left:804px;top:100px;width:136px;height:16px;background:#3d80df;color:#fff;font-size:11px;line-height:15px;"><span class="a" style="left:29px;top:0;">Clip Manager</span></div>
<div class="a" style="left:924px;top:100px;width:16px;height:16px;box-sizing:border-box;border:1px solid;border-color:#fff #6c6c60 #6c6c60 #fff;background:#d4d4d4;"></div>
<svg style="left:928px;top:106px" width="9" height="5" viewBox="0 0 9 5"><path d="M0 0H9L4.500 5Z" fill="#000"/></svg>
<div class="a" style="left:804px;top:116px;width:136px;height:567px;box-sizing:border-box;border:1px solid #000;background:#fff;"></div>
<div class="a" style="left:806px;top:117px;width:133px;height:19px;background:linear-gradient(#fff,#f0f0f4 80%,#d8d8e0);"></div>
<div class="t" style="left:817px;top:121px;">Clip</div>
<svg style="left:842px;top:124px" width="9" height="5" viewBox="0 0 9 5"><path d="M0 0H9L4.500 5Z" fill="#a8acb0"/></svg>
<div class="a" style="left:866px;top:120px;width:1px;height:13px;background:#c0c0c8;box-shadow:1px 0 0 #fff;"></div>
<div class="a" style="left:936px;top:120px;width:1px;height:13px;background:#c0c0c8;"></div>
<div class="t" style="left:877px;top:121px;">Start Time</div>
<div class="ico" style="left:809px;top:137px;height:16px;"></div><svg style="left:811px;top:137px" width="12" height="16" viewBox="0 0 12 16" shape-rendering="crispEdges"><path d="M0.5 7V9M1.5 6V10M2.5 2V14M3.5 5V11M4.5 7V9M5.5 5V11M6.5 4V12M7.5 6V10M8.5 7V9M9.5 6V10M10.5 7V9" stroke="#008a00" stroke-width="1" fill="none"/></svg>
<div class="row" style="top:139px">52_87</div><div class="rowt" style="top:139px">0:00:00.53</div>
<div class="ico" style="left:809px;top:154px;height:16px;"></div><svg style="left:811px;top:154px" width="12" height="16" viewBox="0 0 12 16" shape-rendering="crispEdges"><path d="M0.5 7V9M1.5 6V10M2.5 2V14M3.5 5V11M4.5 7V9M5.5 5V11M6.5 4V12M7.5 6V10M8.5 7V9M9.5 6V10M10.5 7V9" stroke="#008a00" stroke-width="1" fill="none"/></svg>
<div class="row" style="top:156px">90677</div><div class="rowt" style="top:156px">0:00:15.90</div>
<div class="ico" style="left:809px;top:171px;height:16px;"></div><svg style="left:811px;top:171px" width="12" height="16" viewBox="0 0 12 16" shape-rendering="crispEdges"><path d="M0.5 7V9M1.5 6V10M2.5 2V14M3.5 5V11M4.5 7V9M5.5 5V11M6.5 4V12M7.5 6V10M8.5 7V9M9.5 6V10M10.5 7V9" stroke="#008a00" stroke-width="1" fill="none"/></svg>
<div class="row" style="top:173px">_0</div><div class="rowt" style="top:173px">0:00:00.44</div>
<div class="ico" style="left:809px;top:188px;height:16px;"></div><svg style="left:811px;top:188px" width="12" height="16" viewBox="0 0 12 16" shape-rendering="crispEdges"><path d="M0.5 7V9M1.5 6V10M2.5 2V14M3.5 5V11M4.5 7V9M5.5 5V11M6.5 4V12M7.5 6V10M8.5 7V9M9.5 6V10M10.5 7V9" stroke="#008a00" stroke-width="1" fill="none"/></svg>
<div class="row" style="top:190px">bobho...</div><div class="rowt" style="top:190px">0:00:25.94</div>
<div class="ico" style="left:809px;top:205px;height:16px;"></div><svg style="left:811px;top:205px" width="12" height="16" viewBox="0 0 12 16" shape-rendering="crispEdges"><path d="M0.5 7V9M1.5 6V10M2.5 2V14M3.5 5V11M4.5 7V9M5.5 5V11M6.5 4V12M7.5 6V10M8.5 7V9M9.5 6V10M10.5 7V9" stroke="#008a00" stroke-width="1" fill="none"/></svg>
<div class="row" style="top:207px">koto-sw</div><div class="rowt" style="top:207px">0:00:07.07</div>
<div class="btn" style="left:5px;top:686px;width:44px;height:54px;border-width:1px 2px 2px 1px;border-color:#fff #9c9ca2 #a4a4a8 #fff;background:linear-gradient(#e8e8ec,#dcdce0 50%,#c8c8cc);"></div>
<div class="btn" style="left:51px;top:686px;width:44px;height:54px;border-width:1px 2px 2px 1px;border-color:#fff #9c9ca2 #a4a4a8 #fff;background:linear-gradient(#e8e8ec,#dcdce0 50%,#c8c8cc);"></div>
<div class="btn" style="left:97px;top:686px;width:44px;height:54px;border-width:1px 2px 2px 1px;border-color:#fff #9c9ca2 #a4a4a8 #fff;background:linear-gradient(#e8e8ec,#dcdce0 50%,#c8c8cc);"></div>
<div class="btn" style="left:144px;top:686px;width:44px;height:54px;border-width:1px 2px 2px 1px;border-color:#fff #9c9ca2 #a4a4a8 #fff;background:linear-gradient(#e8e8ec,#dcdce0 50%,#c8c8cc);"></div>
<div class="btn" style="left:191px;top:686px;width:44px;height:54px;border-width:1px 2px 2px 1px;border-color:#fff #9c9ca2 #a4a4a8 #fff;background:linear-gradient(#e8e8ec,#dcdce0 50%,#c8c8cc);"></div>
<div class="btn" style="left:238px;top:686px;width:44px;height:54px;border-width:1px 2px 2px 1px;border-color:#fff #9c9ca2 #a4a4a8 #fff;background:linear-gradient(#e8e8ec,#dcdce0 50%,#c8c8cc);"></div>
<div class="btn" style="left:285px;top:686px;width:44px;height:54px;border-width:1px 2px 2px 1px;border-color:#fff #9c9ca2 #a4a4a8 #fff;background:linear-gradient(#e8e8ec,#dcdce0 50%,#c8c8cc);"></div>
<div class="btn" style="left:331px;top:686px;width:44px;height:54px;border-width:1px 2px 2px 1px;border-color:#fff #9c9ca2 #a4a4a8 #fff;background:linear-gradient(#e8e8ec,#dcdce0 50%,#c8c8cc);"></div>
<svg style="left:19px;top:703px" width="16" height="20" viewBox="0 0 16 20"><path d="M0 .5L15.500 10L0 19.500Z" fill="#008000"/></svg>
<svg style="left:62px;top:702px" width="21" height="21" viewBox="0 0 21 21"><circle cx="10.500" cy="10.500" r="9.800" fill="#000"/><circle cx="10.800" cy="11" r="9" fill="#800000"/></svg>
<svg style="left:107px;top:701px" width="24" height="24" viewBox="0 0 24 24"><path d="M12 2.500Q4 2.500 3.500 9.500" fill="none" stroke="#000" stroke-width="1.200"/><path d="M1 7L3.500 10.500L6.500 7.500" fill="none" stroke="#000" stroke-width="1.200"/><path d="M11 20.500Q19 20.500 19.500 13" fill="none" stroke="#000" stroke-width="1.200"/><path d="M17 15L19.500 11.500L22 15" fill="none" stroke="#000" stroke-width="1.200"/><path d="M17 2V8.500M20 2V8.500" stroke="#000" stroke-width="1.900"/><path d="M3.500 13L9.500 17.500L3.500 22Z" fill="#008000"/></svg>
<div class="a" style="left:158px;top:705px;width:16px;height:16px;background:#000;"></div>
<svg style="left:206px;top:703px" width="14" height="20" viewBox="0 0 14 20"><rect x="0" y=".5" width="3.500" height="19" fill="#000"/><path d="M14 .5V19.500L3.500 10Z" fill="#000"/></svg>
<svg style="left:249px;top:703px" width="20" height="20" viewBox="0 0 20 20"><path d="M10 .5V19.500L0 10ZM19.500 .5V19.500L9.500 10Z" fill="#000"/></svg>
<svg style="left:298px;top:703px" width="20" height="20" viewBox="0 0 20 20"><path d="M.5 .5V19.500L10.500 10ZM10 .5V19.500L20 10Z" fill="#000"/></svg>
<svg style="left:347px;top:703px" width="14" height="20" viewBox="0 0 14 20"><rect x="10.500" y=".5" width="3.500" height="19" fill="#000"/><path d="M0 .5V19.500L10.500 10Z" fill="#000"/></svg>
<div class="t" style="left:379px;top:695px;">Sel Length</div>
<div class="t" style="left:379px;top:719px;">File Length</div>
<div class="t" style="left:543px;top:695px;">Start</div>
<div class="t" style="left:543px;top:719px;">End</div>
<div class="fld" style="left:460px;top:693px;width:79px;height:19px;">0:00:00.000</div>
<div class="fld" style="left:460px;top:717px;width:79px;height:19px;">0:03:57.96</div>
<div class="fld" style="left:603px;top:693px;width:80px;height:19px;">0:00:45.041</div>
<div class="fld" style="left:603px;top:717px;width:80px;height:19px;">0:00:45.041</div>
<div class="t" style="left:822px;top:688px;font-size:24px;line-height:26px;letter-spacing:.35px;-webkit-text-stroke:.7px #000;">0:00:45.04</div>
<div class="sl" style="left:684px;top:715px;width:256px;height:14px;"><div class="w" style="width:31px;line-height:13px;">-15dB&#8202;</div><div class="th" style="left:122px;"></div><div class="g" style="width:122px"></div></div>
<div class="a" style="left:684px;top:729px;width:255px;height:11px;background:#000;"></div>
<div class="a" style="left:4px;top:741px;width:938px;height:1px;background:#a0a0a8;"></div><div class="a" style="left:4px;top:742px;width:938px;height:2px;background:#fff;"></div>
<div class="a" style="left:4px;top:744px;width:938px;height:21px;background:linear-gradient(#e8e8ec,#e0dfe3 50%,#d4d4dc);"></div>
<div class="t" style="left:5px;top:749px;">Switch - audio converter software www.nch.com.au/switch</div>
<div class="a" style="left:620px;top:747px;width:1px;height:16px;background:#c4c0a8;box-shadow:1px 0 0 #fff;"></div>
<div class="a" style="left:780px;top:747px;width:1px;height:16px;background:#c4c0a8;box-shadow:1px 0 0 #fff;"></div>
<div class="a" style="left:938px;top:747px;width:1px;height:16px;background:#c4c0a8;box-shadow:1px 0 0 #fff;"></div>
<div class="t" style="left:626px;top:749px;">Track Count: 10</div>
<div class="t" style="left:786px;top:749px;">Clip Count: 5</div>
</body></html>
